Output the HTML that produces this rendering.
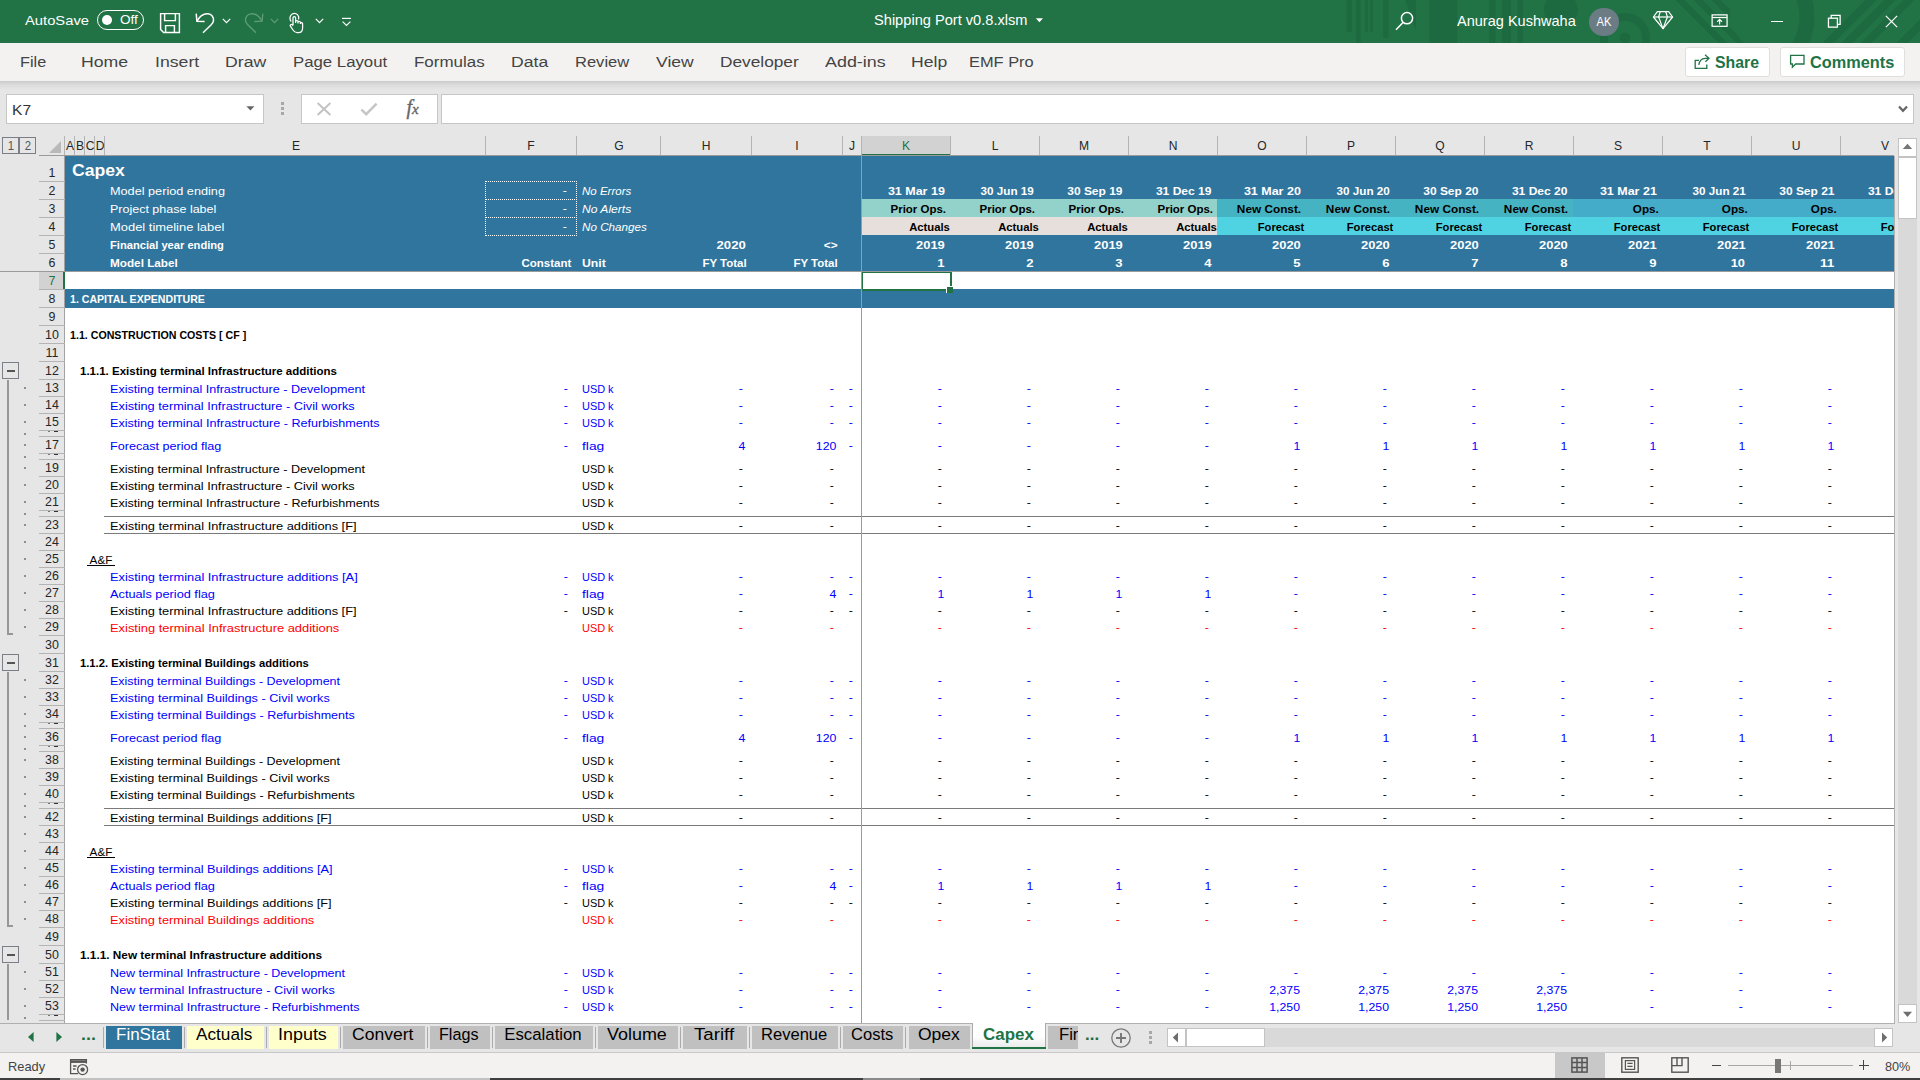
<!DOCTYPE html><html><head><meta charset="utf-8"><title>Shipping Port v0.8.xlsm - Excel</title><style>
html,body{margin:0;padding:0;background:#fff;}
#a{position:relative;width:1920px;height:1080px;overflow:hidden;background:#fff;font-family:"Liberation Sans", sans-serif;}
#a div,#a span,#a svg{position:absolute;}
#a span{white-space:pre;line-height:1;display:block;}
</style></head><body><div id="a">
<div style="left:0px;top:0px;width:1920px;height:43px;background:#217346;"></div>
<svg style="left:1340px;top:0" width="580" height="43" viewBox="0 0 580 43">
<g fill="#1e6a40">
<rect x="6.4" y="0" width="5.5" height="32"/><rect x="15.8" y="0" width="4.7" height="43"/>
<rect x="25" y="0" width="3" height="32"/><rect x="30" y="0" width="3" height="32"/>
<rect x="43" y="0" width="5.6" height="38"/>
<path d="M65 0 H76 V31 Z"/><rect x="89.3" y="0" width="28" height="43"/>
<rect x="149" y="0" width="6.6" height="43"/><rect x="162" y="0" width="9" height="43"/><rect x="177.5" y="0" width="5.5" height="43"/>
<circle cx="220.8" cy="9.9" r="17"/>
<circle cx="285" cy="38" r="5.5"/>
</g>
<g fill="none" stroke="#1e6a40">
<circle cx="285" cy="38" r="21" stroke-width="8"/>
<path d="M338 -2 L386 46 M356 -2 L404 46 M374 -2 L422 46" stroke-width="6.5"/>
<circle cx="426" cy="14" r="36" fill="#217346" stroke="none"/>
<path d="M440 -32 A 58 58 0 0 1 440 66" stroke-width="15"/>
<path d="M486 45 L534 -3 M505 45 L553 -3 M524 45 L572 -3 M560 45 L590 15" stroke-width="8"/>
</g></svg>
<div style="left:97px;top:10.3px;width:45px;height:17.6px;border:1.5px solid #fff;border-radius:11px;"></div>
<div style="left:102px;top:15.3px;width:10px;height:10px;border-radius:50%;background:#fff;"></div>
<svg style="left:159px;top:12px" width="22" height="22" viewBox="0 0 22 22" fill="none" stroke="#fff" stroke-width="1.45">
<path d="M1.6 1.6 H20.4 V20.4 H4.6 L1.6 17.4 Z"/><path d="M5.6 1.6 V8.6 H16.4 V1.6"/><path d="M6.6 20.4 V13.6 H15.4 V20.4"/></svg>
<svg style="left:194px;top:11px" width="22" height="24" viewBox="0 0 22 24" fill="none" stroke="#fff" stroke-width="1.5">
<path d="M2.2 2.6 L2.9 10.2 L10.6 10.5"/><path d="M3 10.1 C5.6 5.2 10 2.5 14 2.8 C17.6 3.1 19.8 6.2 19.5 9.6 C19.3 11.4 18.4 12.6 17 14 L9 21.7"/></svg>
<svg style="left:222px;top:18px" width="9" height="6" viewBox="0 0 9 6" fill="none" stroke="#fff" stroke-width="1.2"><path d="M0.8 0.8 L4.5 4.6 L8.2 0.8"/></svg>
<svg style="left:243px;top:11px" width="22" height="24" viewBox="0 0 22 24" fill="none" stroke="#5f9d7a" stroke-width="1.3">
<path d="M19.8 2.6 L19.1 10.2 L11.4 10.5"/><path d="M19 10.1 C16.4 5.2 12 2.5 8 2.8 C4.4 3.1 2.2 6.2 2.5 9.6 C2.7 11.4 3.6 12.6 5 14 L13 21.7"/></svg>
<svg style="left:270px;top:18px" width="9" height="6" viewBox="0 0 9 6" fill="none" stroke="#5f9d7a" stroke-width="1.2"><path d="M0.8 0.8 L4.5 4.6 L8.2 0.8"/></svg>
<svg style="left:287px;top:11px" width="19" height="24" viewBox="0 0 19 24" fill="none" stroke="#fff" stroke-width="1.25">
<path d="M4.2 10.5 C2.2 8.2 2.6 4.6 5.2 3 C7.8 1.6 10.8 2.8 11.6 5.6 C11.8 6.6 11.8 7.6 11.4 8.4"/>
<path d="M6 14.6 V6.8 C6 5.2 8.6 5.2 8.6 6.8 V12 M8.6 10.4 C8.6 9.2 11 9.2 11 10.6 V12.4 M11 11.2 C11 10 13.4 10.2 13.4 11.6 V13 M13.4 12.2 C13.4 11.2 15.6 11.4 15.6 12.8 V17 C15.6 19.8 14 21.6 11.4 21.6 H10 C8 21.6 7 20.6 6 19 L3.4 15.2 C2.6 14 4.2 12.8 5.2 13.8 L6 14.6"/></svg>
<svg style="left:315px;top:18px" width="9" height="6" viewBox="0 0 9 6" fill="none" stroke="#fff" stroke-width="1.2"><path d="M0.8 0.8 L4.5 4.6 L8.2 0.8"/></svg>
<svg style="left:341px;top:16px" width="11" height="11" viewBox="0 0 11 11" fill="none" stroke="#fff" stroke-width="1.2"><path d="M1 2.4 H10"/><path d="M1.6 5.6 L5.5 9.4 L9.4 5.6"/></svg>
<svg style="left:1035px;top:18px" width="9" height="5" viewBox="0 0 9 5"><path d="M0.8 0.3 H8 L4.4 4.2 Z" fill="#fff"/></svg>
<svg style="left:1394.2px;top:9.7px" width="22" height="22" viewBox="0 0 22 22" fill="none" stroke="#fff" stroke-width="1.5"><circle cx="13" cy="8.2" r="5.6"/><path d="M9 12.4 L2 19.8"/></svg>
<div style="left:1589.3px;top:8px;width:29.4px;height:28.4px;border-radius:50%;background:#6c7c85;"></div>
<svg style="left:1652px;top:10px" width="22" height="20" viewBox="0 0 22 20" fill="none" stroke="#fff" stroke-width="1.2" stroke-linejoin="round">
<path d="M5.4 1.6 H16.6 L20.6 7 L11 18.6 L1.4 7 Z"/><path d="M1.4 7 H20.6"/><path d="M8.2 1.6 L6.6 7 L11 18.6 L15.4 7 L13.8 1.6"/></svg>
<svg style="left:1711px;top:14.4px" width="17.2" height="13.2" viewBox="0 0 19 15" fill="none" stroke="#fff" stroke-width="1.4">
<rect x="1" y="1" width="17" height="13"/><path d="M1 4 H18"/><path d="M9.5 12 V6.4 M6.8 8.8 L9.5 6.2 L12.2 8.8"/></svg>
<div style="left:1770.8px;top:20.6px;width:12.6px;height:1.4px;background:#fff;"></div>
<svg style="left:1826.6px;top:13.6px" width="14.6" height="14.6" viewBox="0 0 16 16" fill="none" stroke="#fff" stroke-width="1.4"><rect x="1.6" y="4.6" width="9.8" height="9.8"/><path d="M4.6 4.6 V1.6 H14.4 V11.4 H11.4"/></svg>
<svg style="left:1884.6px;top:14.6px" width="13" height="13" viewBox="0 0 15 15" fill="none" stroke="#fff" stroke-width="1.5"><path d="M1 1 L14 14 M14 1 L1 14"/></svg>
<div style="left:0px;top:43px;width:1920px;height:38px;background:#f3f2f1;"></div>
<div style="left:0px;top:81px;width:1920px;height:55px;background:#e6e6e6;"></div>
<div style="left:0;top:81px;width:1920px;height:9px;background:linear-gradient(#cbcbcb,#dcdcdc 45%,#e6e6e6);"></div>
<div style="left:1685px;top:47px;width:83px;height:28px;background:#fff;border:1px solid #e1dfdd;border-radius:3px;box-sizing:content-box"></div>
<div style="left:1780px;top:47px;width:123px;height:28px;background:#fff;border:1px solid #e1dfdd;border-radius:3px;box-sizing:content-box"></div>
<svg style="left:1693px;top:53px" width="18" height="17" viewBox="0 0 18 17" fill="none" stroke="#217346" stroke-width="1.3">
<path d="M6 7.3 H2.2 V15.4 H13.8 V11.4"/><path d="M5.8 11.8 C6.4 8 8.6 5.6 12 5.4 H15.6 M12 1.8 L16 5.3 L12.4 8.8"/></svg>
<svg style="left:1789px;top:54px" width="17" height="15" viewBox="0 0 17 15" fill="none" stroke="#217346" stroke-width="1.3">
<path d="M1.6 1.4 H15 V10 H6.6 L3.4 13.2 V10 H1.6 Z"/></svg>
<div style="left:6px;top:94px;width:256px;height:28px;background:#fff;border:1px solid #c6c6c6;"></div>
<svg style="left:246px;top:106px" width="9" height="5" viewBox="0 0 9 5"><path d="M0.4 0.3 H8.4 L4.4 4.4 Z" fill="#666"/></svg>
<div style="left:281px;top:102px;width:3px;height:3px;background:#a8a8a8;"></div>
<div style="left:281px;top:107px;width:3px;height:3px;background:#a8a8a8;"></div>
<div style="left:281px;top:112px;width:3px;height:3px;background:#a8a8a8;"></div>
<div style="left:301px;top:94px;width:135px;height:28px;background:#fff;border:1px solid #c6c6c6;"></div>
<svg style="left:316px;top:102px" width="16" height="14" viewBox="0 0 16 14" fill="none" stroke="#c2c2c2" stroke-width="1.9"><path d="M1.6 1 L14.4 13 M14.4 1 L1.6 13"/></svg>
<svg style="left:360px;top:102px" width="18" height="14" viewBox="0 0 18 14" fill="none" stroke="#c6c6c6" stroke-width="2.5"><path d="M1.4 7.6 L6.2 12.2 L16.6 1.6"/></svg>
<span style="left:406.5px;top:95px;font-family:'Liberation Serif',serif;font-style:italic;font-size:20px;color:#666;font-weight:400;-webkit-text-stroke:0.35px #666;letter-spacing:0px;line-height:1.2;">f<span style="position:static;display:inline;font-size:15px;">x</span></span>
<div style="left:441px;top:94px;width:1471px;height:28px;background:#fff;border:1px solid #c6c6c6;"></div>
<svg style="left:1898.4px;top:104.6px" width="10" height="8" viewBox="0 0 10 8" fill="none" stroke="#666" stroke-width="2.2"><path d="M1 1.4 L5 5.8 L9 1.4"/></svg>
<div style="left:0px;top:136px;width:1920px;height:20px;background:#e6e6e6;"></div>
<div style="left:862px;top:136px;width:88px;height:20px;background:#d2d2d2;"></div>
<div style="left:862px;top:154px;width:89px;height:2px;background:#217346;"></div>
<div style="left:74px;top:136px;width:1px;height:19px;background:#b4b4b4;"></div>
<div style="left:84px;top:136px;width:1px;height:19px;background:#b4b4b4;"></div>
<div style="left:94px;top:136px;width:1px;height:19px;background:#b4b4b4;"></div>
<div style="left:104px;top:136px;width:1px;height:19px;background:#b4b4b4;"></div>
<div style="left:485px;top:136px;width:1px;height:19px;background:#b4b4b4;"></div>
<div style="left:576px;top:136px;width:1px;height:19px;background:#b4b4b4;"></div>
<div style="left:660px;top:136px;width:1px;height:19px;background:#b4b4b4;"></div>
<div style="left:751px;top:136px;width:1px;height:19px;background:#b4b4b4;"></div>
<div style="left:842px;top:136px;width:1px;height:19px;background:#b4b4b4;"></div>
<div style="left:861px;top:136px;width:1px;height:19px;background:#b4b4b4;"></div>
<div style="left:950px;top:136px;width:1px;height:19px;background:#b4b4b4;"></div>
<div style="left:1039px;top:136px;width:1px;height:19px;background:#b4b4b4;"></div>
<div style="left:1128px;top:136px;width:1px;height:19px;background:#b4b4b4;"></div>
<div style="left:1217px;top:136px;width:1px;height:19px;background:#b4b4b4;"></div>
<div style="left:1306px;top:136px;width:1px;height:19px;background:#b4b4b4;"></div>
<div style="left:1395px;top:136px;width:1px;height:19px;background:#b4b4b4;"></div>
<div style="left:1484px;top:136px;width:1px;height:19px;background:#b4b4b4;"></div>
<div style="left:1573px;top:136px;width:1px;height:19px;background:#b4b4b4;"></div>
<div style="left:1662px;top:136px;width:1px;height:19px;background:#b4b4b4;"></div>
<div style="left:1751px;top:136px;width:1px;height:19px;background:#b4b4b4;"></div>
<div style="left:1840px;top:136px;width:1px;height:19px;background:#b4b4b4;"></div>
<div style="left:64px;top:136px;width:1px;height:19px;background:#b4b4b4;"></div>
<div style="left:39px;top:155px;width:1856px;height:1px;background:#9b9b9b;"></div>
<svg style="left:48px;top:140px" width="14" height="14" viewBox="0 0 14 14"><path d="M13 1 V13 H1 Z" fill="#b9b9b9"/></svg>
<div style="left:2px;top:137px;width:15px;height:15px;border:1px solid #7b7e86;background:#e6e6e6;"></div>
<div style="left:19px;top:137px;width:15px;height:15px;border:1px solid #7b7e86;background:#e6e6e6;"></div>
<div style="left:0px;top:156px;width:65px;height:867px;background:#e6e6e6;"></div>
<div style="left:64px;top:156px;width:1px;height:867px;background:#a2a2a2;"></div>
<div style="left:39px;top:272px;width:25px;height:18px;background:#d2d2d2;"></div>
<div style="left:63px;top:272px;width:2px;height:18px;background:#217346;"></div>
<div style="left:39px;top:181px;width:26px;height:1px;background:#b4b4b4;"></div>
<div style="left:39px;top:199px;width:26px;height:1px;background:#b4b4b4;"></div>
<div style="left:39px;top:217px;width:26px;height:1px;background:#b4b4b4;"></div>
<div style="left:39px;top:235px;width:26px;height:1px;background:#b4b4b4;"></div>
<div style="left:39px;top:253px;width:26px;height:1px;background:#b4b4b4;"></div>
<div style="left:39px;top:271px;width:26px;height:1px;background:#b4b4b4;"></div>
<div style="left:39px;top:289px;width:26px;height:1px;background:#b4b4b4;"></div>
<div style="left:39px;top:307px;width:26px;height:1px;background:#b4b4b4;"></div>
<div style="left:39px;top:325px;width:26px;height:1px;background:#b4b4b4;"></div>
<div style="left:39px;top:343px;width:26px;height:1px;background:#b4b4b4;"></div>
<div style="left:39px;top:361px;width:26px;height:1px;background:#b4b4b4;"></div>
<div style="left:39px;top:379px;width:26px;height:1px;background:#b4b4b4;"></div>
<div style="left:39px;top:396px;width:26px;height:1px;background:#b4b4b4;"></div>
<div style="left:39px;top:413px;width:26px;height:1px;background:#b4b4b4;"></div>
<div style="left:39px;top:430px;width:26px;height:1px;background:#b4b4b4;"></div>
<div style="left:39px;top:436px;width:26px;height:1px;background:#b4b4b4;"></div>
<div style="left:48px;top:431px;width:2px;height:1px;background:#777;"></div>
<div style="left:54px;top:431px;width:4px;height:1px;background:#333;"></div>
<div style="left:39px;top:453px;width:26px;height:1px;background:#b4b4b4;"></div>
<div style="left:39px;top:459px;width:26px;height:1px;background:#b4b4b4;"></div>
<div style="left:48px;top:454px;width:2px;height:1px;background:#777;"></div>
<div style="left:54px;top:454px;width:4px;height:1px;background:#333;"></div>
<div style="left:39px;top:476px;width:26px;height:1px;background:#b4b4b4;"></div>
<div style="left:39px;top:493px;width:26px;height:1px;background:#b4b4b4;"></div>
<div style="left:39px;top:510px;width:26px;height:1px;background:#b4b4b4;"></div>
<div style="left:39px;top:516px;width:26px;height:1px;background:#b4b4b4;"></div>
<div style="left:48px;top:511px;width:2px;height:1px;background:#777;"></div>
<div style="left:54px;top:511px;width:4px;height:1px;background:#333;"></div>
<div style="left:39px;top:533px;width:26px;height:1px;background:#b4b4b4;"></div>
<div style="left:39px;top:550px;width:26px;height:1px;background:#b4b4b4;"></div>
<div style="left:39px;top:567px;width:26px;height:1px;background:#b4b4b4;"></div>
<div style="left:39px;top:584px;width:26px;height:1px;background:#b4b4b4;"></div>
<div style="left:39px;top:601px;width:26px;height:1px;background:#b4b4b4;"></div>
<div style="left:39px;top:618px;width:26px;height:1px;background:#b4b4b4;"></div>
<div style="left:39px;top:635px;width:26px;height:1px;background:#b4b4b4;"></div>
<div style="left:39px;top:653px;width:26px;height:1px;background:#b4b4b4;"></div>
<div style="left:39px;top:671px;width:26px;height:1px;background:#b4b4b4;"></div>
<div style="left:39px;top:688px;width:26px;height:1px;background:#b4b4b4;"></div>
<div style="left:39px;top:705px;width:26px;height:1px;background:#b4b4b4;"></div>
<div style="left:39px;top:722px;width:26px;height:1px;background:#b4b4b4;"></div>
<div style="left:39px;top:728px;width:26px;height:1px;background:#b4b4b4;"></div>
<div style="left:48px;top:723px;width:2px;height:1px;background:#777;"></div>
<div style="left:54px;top:723px;width:4px;height:1px;background:#333;"></div>
<div style="left:39px;top:745px;width:26px;height:1px;background:#b4b4b4;"></div>
<div style="left:39px;top:751px;width:26px;height:1px;background:#b4b4b4;"></div>
<div style="left:48px;top:746px;width:2px;height:1px;background:#777;"></div>
<div style="left:54px;top:746px;width:4px;height:1px;background:#333;"></div>
<div style="left:39px;top:768px;width:26px;height:1px;background:#b4b4b4;"></div>
<div style="left:39px;top:785px;width:26px;height:1px;background:#b4b4b4;"></div>
<div style="left:39px;top:802px;width:26px;height:1px;background:#b4b4b4;"></div>
<div style="left:39px;top:808px;width:26px;height:1px;background:#b4b4b4;"></div>
<div style="left:48px;top:803px;width:2px;height:1px;background:#777;"></div>
<div style="left:54px;top:803px;width:4px;height:1px;background:#333;"></div>
<div style="left:39px;top:825px;width:26px;height:1px;background:#b4b4b4;"></div>
<div style="left:39px;top:842px;width:26px;height:1px;background:#b4b4b4;"></div>
<div style="left:39px;top:859px;width:26px;height:1px;background:#b4b4b4;"></div>
<div style="left:39px;top:876px;width:26px;height:1px;background:#b4b4b4;"></div>
<div style="left:39px;top:893px;width:26px;height:1px;background:#b4b4b4;"></div>
<div style="left:39px;top:910px;width:26px;height:1px;background:#b4b4b4;"></div>
<div style="left:39px;top:927px;width:26px;height:1px;background:#b4b4b4;"></div>
<div style="left:39px;top:945px;width:26px;height:1px;background:#b4b4b4;"></div>
<div style="left:39px;top:963px;width:26px;height:1px;background:#b4b4b4;"></div>
<div style="left:39px;top:980px;width:26px;height:1px;background:#b4b4b4;"></div>
<div style="left:39px;top:997px;width:26px;height:1px;background:#b4b4b4;"></div>
<div style="left:39px;top:1014px;width:26px;height:1px;background:#b4b4b4;"></div>
<div style="left:39px;top:1020px;width:26px;height:1px;background:#b4b4b4;"></div>
<div style="left:48px;top:1015px;width:2px;height:1px;background:#777;"></div>
<div style="left:54px;top:1015px;width:4px;height:1px;background:#333;"></div>
<div style="left:2px;top:362px;width:15px;height:15px;border:1px solid #7b7e86;background:#e6e6e6;"></div>
<div style="left:6.5px;top:369.5px;width:8px;height:2px;background:#555;"></div>
<div style="left:7px;top:379.5px;width:2px;height:255.0px;background:#979797;"></div>
<div style="left:7px;top:632.5px;width:6.4px;height:2px;background:#979797;"></div>
<div style="left:24px;top:387px;width:2px;height:2px;background:#8f8f8f;"></div>
<div style="left:24px;top:404px;width:2px;height:2px;background:#8f8f8f;"></div>
<div style="left:24px;top:421px;width:2px;height:2px;background:#8f8f8f;"></div>
<div style="left:24px;top:433px;width:2px;height:2px;background:#8f8f8f;"></div>
<div style="left:24px;top:444px;width:2px;height:2px;background:#8f8f8f;"></div>
<div style="left:24px;top:456px;width:2px;height:2px;background:#8f8f8f;"></div>
<div style="left:24px;top:467px;width:2px;height:2px;background:#8f8f8f;"></div>
<div style="left:24px;top:484px;width:2px;height:2px;background:#8f8f8f;"></div>
<div style="left:24px;top:501px;width:2px;height:2px;background:#8f8f8f;"></div>
<div style="left:24px;top:513px;width:2px;height:2px;background:#8f8f8f;"></div>
<div style="left:24px;top:524px;width:2px;height:2px;background:#8f8f8f;"></div>
<div style="left:24px;top:541px;width:2px;height:2px;background:#8f8f8f;"></div>
<div style="left:24px;top:558px;width:2px;height:2px;background:#8f8f8f;"></div>
<div style="left:24px;top:575px;width:2px;height:2px;background:#8f8f8f;"></div>
<div style="left:24px;top:592px;width:2px;height:2px;background:#8f8f8f;"></div>
<div style="left:24px;top:609px;width:2px;height:2px;background:#8f8f8f;"></div>
<div style="left:24px;top:626px;width:2px;height:2px;background:#8f8f8f;"></div>
<div style="left:2px;top:654px;width:15px;height:15px;border:1px solid #7b7e86;background:#e6e6e6;"></div>
<div style="left:6.5px;top:661.5px;width:8px;height:2px;background:#555;"></div>
<div style="left:7px;top:671.5px;width:2px;height:255.0px;background:#979797;"></div>
<div style="left:7px;top:924.5px;width:6.4px;height:2px;background:#979797;"></div>
<div style="left:24px;top:679px;width:2px;height:2px;background:#8f8f8f;"></div>
<div style="left:24px;top:696px;width:2px;height:2px;background:#8f8f8f;"></div>
<div style="left:24px;top:713px;width:2px;height:2px;background:#8f8f8f;"></div>
<div style="left:24px;top:725px;width:2px;height:2px;background:#8f8f8f;"></div>
<div style="left:24px;top:736px;width:2px;height:2px;background:#8f8f8f;"></div>
<div style="left:24px;top:748px;width:2px;height:2px;background:#8f8f8f;"></div>
<div style="left:24px;top:759px;width:2px;height:2px;background:#8f8f8f;"></div>
<div style="left:24px;top:776px;width:2px;height:2px;background:#8f8f8f;"></div>
<div style="left:24px;top:793px;width:2px;height:2px;background:#8f8f8f;"></div>
<div style="left:24px;top:805px;width:2px;height:2px;background:#8f8f8f;"></div>
<div style="left:24px;top:816px;width:2px;height:2px;background:#8f8f8f;"></div>
<div style="left:24px;top:833px;width:2px;height:2px;background:#8f8f8f;"></div>
<div style="left:24px;top:850px;width:2px;height:2px;background:#8f8f8f;"></div>
<div style="left:24px;top:867px;width:2px;height:2px;background:#8f8f8f;"></div>
<div style="left:24px;top:884px;width:2px;height:2px;background:#8f8f8f;"></div>
<div style="left:24px;top:901px;width:2px;height:2px;background:#8f8f8f;"></div>
<div style="left:24px;top:918px;width:2px;height:2px;background:#8f8f8f;"></div>
<div style="left:2px;top:946px;width:15px;height:15px;border:1px solid #7b7e86;background:#e6e6e6;"></div>
<div style="left:6.5px;top:953.5px;width:8px;height:2px;background:#555;"></div>
<div style="left:7px;top:963.5px;width:2px;height:56.0px;background:#979797;"></div>
<div style="left:24px;top:971px;width:2px;height:2px;background:#8f8f8f;"></div>
<div style="left:24px;top:988px;width:2px;height:2px;background:#8f8f8f;"></div>
<div style="left:24px;top:1005px;width:2px;height:2px;background:#8f8f8f;"></div>
<div style="left:24px;top:1017px;width:2px;height:2px;background:#8f8f8f;"></div>
<div style="left:65px;top:156px;width:1829px;height:867px;background:#fff;"></div>
<div style="left:65px;top:156px;width:1829px;height:115px;background:#2f759e;"></div>
<div style="left:65px;top:289px;width:1829px;height:19px;background:#2f759e;"></div>
<div style="left:862px;top:199px;width:355px;height:18px;background:#93d2ca;"></div>
<div style="left:1217px;top:199px;width:356px;height:18px;background:#46b3c3;"></div>
<div style="left:1573px;top:199px;width:321px;height:18px;background:#44abc9;"></div>
<div style="left:862px;top:217px;width:355px;height:18px;background:#e7dfdb;"></div>
<div style="left:1217px;top:217px;width:677px;height:18px;background:#4fd3e3;"></div>
<div style="left:485px;top:181px;width:90px;height:17px;border:1px dotted #fff;"></div>
<div style="left:485px;top:199px;width:90px;height:17px;border:1px dotted #fff;"></div>
<div style="left:485px;top:217px;width:90px;height:17px;border:1px dotted #fff;"></div>
<div style="left:104px;top:516px;width:1790px;height:1px;background:#7a7a7a;"></div>
<div style="left:104px;top:533px;width:1790px;height:1px;background:#7a7a7a;"></div>
<div style="left:87.3px;top:565.2px;width:27.4px;height:1px;background:#000;"></div>
<div style="left:104px;top:808px;width:1790px;height:1px;background:#7a7a7a;"></div>
<div style="left:104px;top:825px;width:1790px;height:1px;background:#7a7a7a;"></div>
<div style="left:87.3px;top:857.2px;width:27.4px;height:1px;background:#000;"></div>
<span style="font-size:13.6px;top:13.79px;color:#fff;left:25.184px;transform:scaleX(1.086);transform-origin:left center;">AutoSave</span>
<span style="font-size:12px;top:14.44px;color:#fff;left:119.88px;transform:scaleX(1.128);transform-origin:left center;">Off</span>
<span style="font-size:14px;top:12.85px;color:#fff;left:873.9599999999999px;transform:scaleX(1.044);transform-origin:left center;">Shipping Port v0.8.xlsm</span>
<span style="font-size:14.4px;top:14.41px;color:#fff;left:1457.336px;transform:scaleX(1.010);transform-origin:left center;">Anurag Kushwaha</span>
<span style="font-size:12px;top:15.74px;color:#fff;left:1603.5px;transform:translateX(-50%) scaleX(0.930);transform-origin:center center;">AK</span>
<span style="font-size:15.5px;top:54.28px;color:#444;left:20.07px;transform:scaleX(1.049);transform-origin:left center;">File</span>
<span style="font-size:15.5px;top:54.28px;color:#444;left:81.07px;transform:scaleX(1.141);transform-origin:left center;">Home</span>
<span style="font-size:15.5px;top:54.28px;color:#444;left:155.07px;transform:scaleX(1.140);transform-origin:left center;">Insert</span>
<span style="font-size:15.5px;top:54.28px;color:#444;left:225.07px;transform:scaleX(1.139);transform-origin:left center;">Draw</span>
<span style="font-size:15.5px;top:54.28px;color:#444;left:293.07px;transform:scaleX(1.082);transform-origin:left center;">Page Layout</span>
<span style="font-size:15.5px;top:54.28px;color:#444;left:414.07px;transform:scaleX(1.094);transform-origin:left center;">Formulas</span>
<span style="font-size:15.5px;top:54.28px;color:#444;left:511.07px;transform:scaleX(1.136);transform-origin:left center;">Data</span>
<span style="font-size:15.5px;top:54.28px;color:#444;left:575.07px;transform:scaleX(1.066);transform-origin:left center;">Review</span>
<span style="font-size:15.5px;top:54.28px;color:#444;left:656.07px;transform:scaleX(1.131);transform-origin:left center;">View</span>
<span style="font-size:15.5px;top:54.28px;color:#444;left:720.07px;transform:scaleX(1.114);transform-origin:left center;">Developer</span>
<span style="font-size:15.5px;top:54.28px;color:#444;left:825.07px;transform:scaleX(1.155);transform-origin:left center;">Add-ins</span>
<span style="font-size:15.5px;top:54.28px;color:#444;left:911.07px;transform:scaleX(1.135);transform-origin:left center;">Help</span>
<span style="font-size:15.5px;top:54.28px;color:#444;left:969.07px;transform:scaleX(1.058);transform-origin:left center;">EMF Pro</span>
<span style="font-size:16.2px;top:53.89px;color:#217346;font-weight:700;left:1714.628px;transform:scaleX(0.977);transform-origin:left center;">Share</span>
<span style="font-size:16.2px;top:53.89px;color:#217346;font-weight:700;left:1809.628px;transform:scaleX(1.007);transform-origin:left center;">Comments</span>
<span style="font-size:14px;top:102.75px;color:#333;left:12.16px;transform:scaleX(1.112);transform-origin:left center;">K7</span>
<span style="font-size:13px;top:138.60px;color:#262626;left:70.3px;transform:translateX(-50%) scaleX(0.930);transform-origin:center center;">A</span>
<span style="font-size:13px;top:138.60px;color:#262626;left:80.3px;transform:translateX(-50%) scaleX(0.930);transform-origin:center center;">B</span>
<span style="font-size:13px;top:138.60px;color:#262626;left:90.3px;transform:translateX(-50%) scaleX(0.930);transform-origin:center center;">C</span>
<span style="font-size:13px;top:138.60px;color:#262626;left:100.3px;transform:translateX(-50%) scaleX(0.930);transform-origin:center center;">D</span>
<span style="font-size:13px;top:138.60px;color:#262626;left:295.5px;transform:translateX(-50%) scaleX(0.930);transform-origin:center center;">E</span>
<span style="font-size:13px;top:138.60px;color:#262626;left:531.0px;transform:translateX(-50%) scaleX(0.930);transform-origin:center center;">F</span>
<span style="font-size:13px;top:138.60px;color:#262626;left:618.5px;transform:translateX(-50%) scaleX(0.930);transform-origin:center center;">G</span>
<span style="font-size:13px;top:138.60px;color:#262626;left:706.0px;transform:translateX(-50%) scaleX(0.930);transform-origin:center center;">H</span>
<span style="font-size:13px;top:138.60px;color:#262626;left:797.0px;transform:translateX(-50%) scaleX(0.930);transform-origin:center center;">I</span>
<span style="font-size:13px;top:138.60px;color:#262626;left:852.0px;transform:translateX(-50%) scaleX(0.930);transform-origin:center center;">J</span>
<span style="font-size:13px;top:138.60px;color:#217346;left:906.0px;transform:translateX(-50%) scaleX(0.930);transform-origin:center center;">K</span>
<span style="font-size:13px;top:138.60px;color:#262626;left:995.0px;transform:translateX(-50%) scaleX(0.930);transform-origin:center center;">L</span>
<span style="font-size:13px;top:138.60px;color:#262626;left:1084.0px;transform:translateX(-50%) scaleX(0.930);transform-origin:center center;">M</span>
<span style="font-size:13px;top:138.60px;color:#262626;left:1173.0px;transform:translateX(-50%) scaleX(0.930);transform-origin:center center;">N</span>
<span style="font-size:13px;top:138.60px;color:#262626;left:1262.0px;transform:translateX(-50%) scaleX(0.930);transform-origin:center center;">O</span>
<span style="font-size:13px;top:138.60px;color:#262626;left:1351.0px;transform:translateX(-50%) scaleX(0.930);transform-origin:center center;">P</span>
<span style="font-size:13px;top:138.60px;color:#262626;left:1440.0px;transform:translateX(-50%) scaleX(0.930);transform-origin:center center;">Q</span>
<span style="font-size:13px;top:138.60px;color:#262626;left:1529.0px;transform:translateX(-50%) scaleX(0.930);transform-origin:center center;">R</span>
<span style="font-size:13px;top:138.60px;color:#262626;left:1618.0px;transform:translateX(-50%) scaleX(0.930);transform-origin:center center;">S</span>
<span style="font-size:13px;top:138.60px;color:#262626;left:1707.0px;transform:translateX(-50%) scaleX(0.930);transform-origin:center center;">T</span>
<span style="font-size:13px;top:138.60px;color:#262626;left:1796.0px;transform:translateX(-50%) scaleX(0.930);transform-origin:center center;">U</span>
<span style="font-size:13px;top:138.60px;color:#262626;left:1885.3px;transform:translateX(-50%) scaleX(0.930);transform-origin:center center;">V</span>
<span style="font-size:12px;top:139.84px;color:#555;left:10.7px;transform:translateX(-50%) scaleX(0.950);transform-origin:center center;">1</span>
<span style="font-size:12px;top:139.84px;color:#555;left:27.7px;transform:translateX(-50%) scaleX(0.950);transform-origin:center center;">2</span>
<span style="font-size:13.5px;top:165.57px;color:#262626;left:52.3px;transform:translateX(-50%) scaleX(0.920);transform-origin:center center;">1</span>
<span style="font-size:13.5px;top:183.57px;color:#262626;left:52.3px;transform:translateX(-50%) scaleX(0.920);transform-origin:center center;">2</span>
<span style="font-size:13.5px;top:201.57px;color:#262626;left:52.3px;transform:translateX(-50%) scaleX(0.920);transform-origin:center center;">3</span>
<span style="font-size:13.5px;top:219.57px;color:#262626;left:52.3px;transform:translateX(-50%) scaleX(0.920);transform-origin:center center;">4</span>
<span style="font-size:13.5px;top:237.57px;color:#262626;left:52.3px;transform:translateX(-50%) scaleX(0.920);transform-origin:center center;">5</span>
<span style="font-size:13.5px;top:255.57px;color:#262626;left:52.3px;transform:translateX(-50%) scaleX(0.920);transform-origin:center center;">6</span>
<span style="font-size:13.5px;top:273.57px;color:#217346;left:52.3px;transform:translateX(-50%) scaleX(0.920);transform-origin:center center;">7</span>
<span style="font-size:13.5px;top:291.57px;color:#262626;left:52.3px;transform:translateX(-50%) scaleX(0.920);transform-origin:center center;">8</span>
<span style="font-size:13.5px;top:309.57px;color:#262626;left:52.3px;transform:translateX(-50%) scaleX(0.920);transform-origin:center center;">9</span>
<span style="font-size:13.5px;top:327.57px;color:#262626;left:52.3px;transform:translateX(-50%) scaleX(0.920);transform-origin:center center;">10</span>
<span style="font-size:13.5px;top:345.57px;color:#262626;left:52.3px;transform:translateX(-50%) scaleX(0.920);transform-origin:center center;">11</span>
<span style="font-size:13.5px;top:363.57px;color:#262626;left:52.3px;transform:translateX(-50%) scaleX(0.920);transform-origin:center center;">12</span>
<span style="font-size:13.5px;top:381.37px;color:#262626;left:52.3px;transform:translateX(-50%) scaleX(0.920);transform-origin:center center;">13</span>
<span style="font-size:13.5px;top:398.37px;color:#262626;left:52.3px;transform:translateX(-50%) scaleX(0.920);transform-origin:center center;">14</span>
<span style="font-size:13.5px;top:415.37px;color:#262626;left:52.3px;transform:translateX(-50%) scaleX(0.920);transform-origin:center center;">15</span>
<span style="font-size:13.5px;top:438.37px;color:#262626;left:52.3px;transform:translateX(-50%) scaleX(0.920);transform-origin:center center;">17</span>
<span style="font-size:13.5px;top:461.37px;color:#262626;left:52.3px;transform:translateX(-50%) scaleX(0.920);transform-origin:center center;">19</span>
<span style="font-size:13.5px;top:478.37px;color:#262626;left:52.3px;transform:translateX(-50%) scaleX(0.920);transform-origin:center center;">20</span>
<span style="font-size:13.5px;top:495.37px;color:#262626;left:52.3px;transform:translateX(-50%) scaleX(0.920);transform-origin:center center;">21</span>
<span style="font-size:13.5px;top:518.37px;color:#262626;left:52.3px;transform:translateX(-50%) scaleX(0.920);transform-origin:center center;">23</span>
<span style="font-size:13.5px;top:535.37px;color:#262626;left:52.3px;transform:translateX(-50%) scaleX(0.920);transform-origin:center center;">24</span>
<span style="font-size:13.5px;top:552.37px;color:#262626;left:52.3px;transform:translateX(-50%) scaleX(0.920);transform-origin:center center;">25</span>
<span style="font-size:13.5px;top:569.37px;color:#262626;left:52.3px;transform:translateX(-50%) scaleX(0.920);transform-origin:center center;">26</span>
<span style="font-size:13.5px;top:586.37px;color:#262626;left:52.3px;transform:translateX(-50%) scaleX(0.920);transform-origin:center center;">27</span>
<span style="font-size:13.5px;top:603.37px;color:#262626;left:52.3px;transform:translateX(-50%) scaleX(0.920);transform-origin:center center;">28</span>
<span style="font-size:13.5px;top:620.37px;color:#262626;left:52.3px;transform:translateX(-50%) scaleX(0.920);transform-origin:center center;">29</span>
<span style="font-size:13.5px;top:637.57px;color:#262626;left:52.3px;transform:translateX(-50%) scaleX(0.920);transform-origin:center center;">30</span>
<span style="font-size:13.5px;top:655.57px;color:#262626;left:52.3px;transform:translateX(-50%) scaleX(0.920);transform-origin:center center;">31</span>
<span style="font-size:13.5px;top:673.37px;color:#262626;left:52.3px;transform:translateX(-50%) scaleX(0.920);transform-origin:center center;">32</span>
<span style="font-size:13.5px;top:690.37px;color:#262626;left:52.3px;transform:translateX(-50%) scaleX(0.920);transform-origin:center center;">33</span>
<span style="font-size:13.5px;top:707.37px;color:#262626;left:52.3px;transform:translateX(-50%) scaleX(0.920);transform-origin:center center;">34</span>
<span style="font-size:13.5px;top:730.37px;color:#262626;left:52.3px;transform:translateX(-50%) scaleX(0.920);transform-origin:center center;">36</span>
<span style="font-size:13.5px;top:753.37px;color:#262626;left:52.3px;transform:translateX(-50%) scaleX(0.920);transform-origin:center center;">38</span>
<span style="font-size:13.5px;top:770.37px;color:#262626;left:52.3px;transform:translateX(-50%) scaleX(0.920);transform-origin:center center;">39</span>
<span style="font-size:13.5px;top:787.37px;color:#262626;left:52.3px;transform:translateX(-50%) scaleX(0.920);transform-origin:center center;">40</span>
<span style="font-size:13.5px;top:810.37px;color:#262626;left:52.3px;transform:translateX(-50%) scaleX(0.920);transform-origin:center center;">42</span>
<span style="font-size:13.5px;top:827.37px;color:#262626;left:52.3px;transform:translateX(-50%) scaleX(0.920);transform-origin:center center;">43</span>
<span style="font-size:13.5px;top:844.37px;color:#262626;left:52.3px;transform:translateX(-50%) scaleX(0.920);transform-origin:center center;">44</span>
<span style="font-size:13.5px;top:861.37px;color:#262626;left:52.3px;transform:translateX(-50%) scaleX(0.920);transform-origin:center center;">45</span>
<span style="font-size:13.5px;top:878.37px;color:#262626;left:52.3px;transform:translateX(-50%) scaleX(0.920);transform-origin:center center;">46</span>
<span style="font-size:13.5px;top:895.37px;color:#262626;left:52.3px;transform:translateX(-50%) scaleX(0.920);transform-origin:center center;">47</span>
<span style="font-size:13.5px;top:912.37px;color:#262626;left:52.3px;transform:translateX(-50%) scaleX(0.920);transform-origin:center center;">48</span>
<span style="font-size:13.5px;top:929.57px;color:#262626;left:52.3px;transform:translateX(-50%) scaleX(0.920);transform-origin:center center;">49</span>
<span style="font-size:13.5px;top:947.57px;color:#262626;left:52.3px;transform:translateX(-50%) scaleX(0.920);transform-origin:center center;">50</span>
<span style="font-size:13.5px;top:965.37px;color:#262626;left:52.3px;transform:translateX(-50%) scaleX(0.920);transform-origin:center center;">51</span>
<span style="font-size:13.5px;top:982.37px;color:#262626;left:52.3px;transform:translateX(-50%) scaleX(0.920);transform-origin:center center;">52</span>
<span style="font-size:13.5px;top:999.37px;color:#262626;left:52.3px;transform:translateX(-50%) scaleX(0.920);transform-origin:center center;">53</span>
<span style="font-size:13.5px;top:1022.37px;color:#262626;left:52.3px;transform:translateX(-50%) scaleX(0.920);transform-origin:center center;">55</span>
<span style="font-size:17px;top:161.51px;color:#fff;font-weight:700;left:72.28px;transform:scaleX(1.036);transform-origin:left center;">Capex</span>
<span style="font-size:11.6px;top:185.18px;color:#fff;left:109.804px;transform:scaleX(1.094);transform-origin:left center;">Model period ending</span>
<span style="font-size:11.6px;top:203.18px;color:#fff;left:109.804px;transform:scaleX(1.078);transform-origin:left center;">Project phase label</span>
<span style="font-size:11.6px;top:221.18px;color:#fff;left:109.804px;transform:scaleX(1.115);transform-origin:left center;">Model timeline label</span>
<span style="font-size:11.6px;top:239.18px;color:#fff;font-weight:700;left:109.804px;transform:scaleX(0.961);transform-origin:left center;">Financial year ending</span>
<span style="font-size:11.6px;top:257.18px;color:#fff;font-weight:700;left:109.804px;transform:scaleX(1.012);transform-origin:left center;">Model Label</span>
<span style="font-size:11.6px;top:184.28px;color:#fff;right:1353.40px;transform:scaleX(1.060);transform-origin:right center;">-</span>
<span style="font-size:11.6px;top:185.18px;color:#fff;font-style:italic;left:581.6039999999999px;transform:scaleX(0.993);transform-origin:left center;">No Errors</span>
<span style="font-size:11.6px;top:202.28px;color:#fff;right:1353.40px;transform:scaleX(1.060);transform-origin:right center;">-</span>
<span style="font-size:11.6px;top:203.18px;color:#fff;font-style:italic;left:581.6039999999999px;transform:scaleX(1.043);transform-origin:left center;">No Alerts</span>
<span style="font-size:11.6px;top:220.28px;color:#fff;right:1353.40px;transform:scaleX(1.060);transform-origin:right center;">-</span>
<span style="font-size:11.6px;top:221.18px;color:#fff;font-style:italic;left:581.6039999999999px;transform:scaleX(1.005);transform-origin:left center;">No Changes</span>
<span style="font-size:11.6px;top:239.18px;color:#fff;font-weight:700;right:1174.42px;transform:scaleX(1.135);transform-origin:right center;">2020</span>
<span style="font-size:11.6px;top:239.18px;color:#fff;font-weight:700;right:1082.42px;transform:scaleX(1.017);transform-origin:right center;">&lt;&gt;</span>
<span style="font-size:11.6px;top:257.18px;color:#fff;font-weight:700;right:1348.72px;transform:scaleX(0.991);transform-origin:right center;">Constant</span>
<span style="font-size:11.6px;top:257.18px;color:#fff;font-weight:700;left:581.6039999999999px;transform:scaleX(1.055);transform-origin:left center;">Unit</span>
<span style="font-size:11.6px;top:257.18px;color:#fff;font-weight:700;right:1173.42px;transform:scaleX(0.991);transform-origin:right center;">FY Total</span>
<span style="font-size:11.6px;top:257.18px;color:#fff;font-weight:700;right:1082.42px;transform:scaleX(0.991);transform-origin:right center;">FY Total</span>
<span style="font-size:11.6px;top:185.18px;color:#fff;font-weight:700;right:975.42px;transform:scaleX(1.078);transform-origin:right center;">31 Mar 19</span>
<span style="font-size:11.6px;top:203.18px;color:#000;font-weight:700;right:974.42px;transform:scaleX(0.991);transform-origin:right center;">Prior Ops.</span>
<span style="font-size:11.6px;top:221.18px;color:#000;font-weight:700;right:970.02px;transform:scaleX(0.973);transform-origin:right center;">Actuals</span>
<span style="font-size:11.6px;top:239.18px;color:#fff;font-weight:700;right:975.42px;transform:scaleX(1.115);transform-origin:right center;">2019</span>
<span style="font-size:11.6px;top:257.18px;color:#fff;font-weight:700;right:975.72px;transform:scaleX(1.128);transform-origin:right center;">1</span>
<span style="font-size:11.6px;top:185.18px;color:#fff;font-weight:700;right:886.42px;transform:scaleX(1.008);transform-origin:right center;">30 Jun 19</span>
<span style="font-size:11.6px;top:203.18px;color:#000;font-weight:700;right:885.42px;transform:scaleX(0.991);transform-origin:right center;">Prior Ops.</span>
<span style="font-size:11.6px;top:221.18px;color:#000;font-weight:700;right:881.02px;transform:scaleX(0.973);transform-origin:right center;">Actuals</span>
<span style="font-size:11.6px;top:239.18px;color:#fff;font-weight:700;right:886.42px;transform:scaleX(1.115);transform-origin:right center;">2019</span>
<span style="font-size:11.6px;top:257.18px;color:#fff;font-weight:700;right:886.72px;transform:scaleX(1.128);transform-origin:right center;">2</span>
<span style="font-size:11.6px;top:185.18px;color:#fff;font-weight:700;right:797.42px;transform:scaleX(1.033);transform-origin:right center;">30 Sep 19</span>
<span style="font-size:11.6px;top:203.18px;color:#000;font-weight:700;right:796.42px;transform:scaleX(0.991);transform-origin:right center;">Prior Ops.</span>
<span style="font-size:11.6px;top:221.18px;color:#000;font-weight:700;right:792.02px;transform:scaleX(0.973);transform-origin:right center;">Actuals</span>
<span style="font-size:11.6px;top:239.18px;color:#fff;font-weight:700;right:797.42px;transform:scaleX(1.115);transform-origin:right center;">2019</span>
<span style="font-size:11.6px;top:257.18px;color:#fff;font-weight:700;right:797.72px;transform:scaleX(1.128);transform-origin:right center;">3</span>
<span style="font-size:11.6px;top:185.18px;color:#fff;font-weight:700;right:708.42px;transform:scaleX(1.039);transform-origin:right center;">31 Dec 19</span>
<span style="font-size:11.6px;top:203.18px;color:#000;font-weight:700;right:707.42px;transform:scaleX(0.991);transform-origin:right center;">Prior Ops.</span>
<span style="font-size:11.6px;top:221.18px;color:#000;font-weight:700;right:703.02px;transform:scaleX(0.973);transform-origin:right center;">Actuals</span>
<span style="font-size:11.6px;top:239.18px;color:#fff;font-weight:700;right:708.42px;transform:scaleX(1.115);transform-origin:right center;">2019</span>
<span style="font-size:11.6px;top:257.18px;color:#fff;font-weight:700;right:708.72px;transform:scaleX(1.128);transform-origin:right center;">4</span>
<span style="font-size:11.6px;top:185.18px;color:#fff;font-weight:700;right:619.42px;transform:scaleX(1.078);transform-origin:right center;">31 Mar 20</span>
<span style="font-size:11.6px;top:203.18px;color:#000;font-weight:700;right:618.42px;transform:scaleX(1.018);transform-origin:right center;">New Const.</span>
<span style="font-size:11.6px;top:221.18px;color:#000;font-weight:700;right:615.72px;transform:scaleX(0.964);transform-origin:right center;">Forecast</span>
<span style="font-size:11.6px;top:239.18px;color:#fff;font-weight:700;right:619.42px;transform:scaleX(1.115);transform-origin:right center;">2020</span>
<span style="font-size:11.6px;top:257.18px;color:#fff;font-weight:700;right:619.72px;transform:scaleX(1.128);transform-origin:right center;">5</span>
<span style="font-size:11.6px;top:185.18px;color:#fff;font-weight:700;right:530.42px;transform:scaleX(1.008);transform-origin:right center;">30 Jun 20</span>
<span style="font-size:11.6px;top:203.18px;color:#000;font-weight:700;right:529.42px;transform:scaleX(1.018);transform-origin:right center;">New Const.</span>
<span style="font-size:11.6px;top:221.18px;color:#000;font-weight:700;right:526.72px;transform:scaleX(0.964);transform-origin:right center;">Forecast</span>
<span style="font-size:11.6px;top:239.18px;color:#fff;font-weight:700;right:530.42px;transform:scaleX(1.115);transform-origin:right center;">2020</span>
<span style="font-size:11.6px;top:257.18px;color:#fff;font-weight:700;right:530.72px;transform:scaleX(1.128);transform-origin:right center;">6</span>
<span style="font-size:11.6px;top:185.18px;color:#fff;font-weight:700;right:441.42px;transform:scaleX(1.033);transform-origin:right center;">30 Sep 20</span>
<span style="font-size:11.6px;top:203.18px;color:#000;font-weight:700;right:440.42px;transform:scaleX(1.018);transform-origin:right center;">New Const.</span>
<span style="font-size:11.6px;top:221.18px;color:#000;font-weight:700;right:437.72px;transform:scaleX(0.964);transform-origin:right center;">Forecast</span>
<span style="font-size:11.6px;top:239.18px;color:#fff;font-weight:700;right:441.42px;transform:scaleX(1.115);transform-origin:right center;">2020</span>
<span style="font-size:11.6px;top:257.18px;color:#fff;font-weight:700;right:441.72px;transform:scaleX(1.128);transform-origin:right center;">7</span>
<span style="font-size:11.6px;top:185.18px;color:#fff;font-weight:700;right:352.42px;transform:scaleX(1.039);transform-origin:right center;">31 Dec 20</span>
<span style="font-size:11.6px;top:203.18px;color:#000;font-weight:700;right:351.42px;transform:scaleX(1.018);transform-origin:right center;">New Const.</span>
<span style="font-size:11.6px;top:221.18px;color:#000;font-weight:700;right:348.72px;transform:scaleX(0.964);transform-origin:right center;">Forecast</span>
<span style="font-size:11.6px;top:239.18px;color:#fff;font-weight:700;right:352.42px;transform:scaleX(1.115);transform-origin:right center;">2020</span>
<span style="font-size:11.6px;top:257.18px;color:#fff;font-weight:700;right:352.72px;transform:scaleX(1.128);transform-origin:right center;">8</span>
<span style="font-size:11.6px;top:185.18px;color:#fff;font-weight:700;right:263.42px;transform:scaleX(1.078);transform-origin:right center;">31 Mar 21</span>
<span style="font-size:11.6px;top:203.18px;color:#000;font-weight:700;right:261.42px;transform:scaleX(1.008);transform-origin:right center;">Ops.</span>
<span style="font-size:11.6px;top:221.18px;color:#000;font-weight:700;right:259.72px;transform:scaleX(0.964);transform-origin:right center;">Forecast</span>
<span style="font-size:11.6px;top:239.18px;color:#fff;font-weight:700;right:263.42px;transform:scaleX(1.115);transform-origin:right center;">2021</span>
<span style="font-size:11.6px;top:257.18px;color:#fff;font-weight:700;right:263.72px;transform:scaleX(1.128);transform-origin:right center;">9</span>
<span style="font-size:11.6px;top:185.18px;color:#fff;font-weight:700;right:174.42px;transform:scaleX(1.008);transform-origin:right center;">30 Jun 21</span>
<span style="font-size:11.6px;top:203.18px;color:#000;font-weight:700;right:172.42px;transform:scaleX(1.008);transform-origin:right center;">Ops.</span>
<span style="font-size:11.6px;top:221.18px;color:#000;font-weight:700;right:170.72px;transform:scaleX(0.964);transform-origin:right center;">Forecast</span>
<span style="font-size:11.6px;top:239.18px;color:#fff;font-weight:700;right:174.42px;transform:scaleX(1.115);transform-origin:right center;">2021</span>
<span style="font-size:11.6px;top:257.18px;color:#fff;font-weight:700;right:174.72px;transform:scaleX(1.106);transform-origin:right center;">10</span>
<span style="font-size:11.6px;top:185.18px;color:#fff;font-weight:700;right:85.42px;transform:scaleX(1.033);transform-origin:right center;">30 Sep 21</span>
<span style="font-size:11.6px;top:203.18px;color:#000;font-weight:700;right:83.42px;transform:scaleX(1.008);transform-origin:right center;">Ops.</span>
<span style="font-size:11.6px;top:221.18px;color:#000;font-weight:700;right:81.72px;transform:scaleX(0.964);transform-origin:right center;">Forecast</span>
<span style="font-size:11.6px;top:239.18px;color:#fff;font-weight:700;right:85.42px;transform:scaleX(1.115);transform-origin:right center;">2021</span>
<span style="font-size:11.6px;top:257.18px;color:#fff;font-weight:700;right:85.72px;transform:scaleX(1.164);transform-origin:right center;">11</span>
<span style="font-size:11.6px;top:185.18px;color:#fff;font-weight:700;right:-3.58px;transform:scaleX(1.039);transform-origin:right center;">31 Dec 21</span>
<span style="font-size:11.6px;top:203.18px;color:#000;font-weight:700;right:-5.58px;transform:scaleX(1.008);transform-origin:right center;">Ops.</span>
<span style="font-size:11.6px;top:221.18px;color:#000;font-weight:700;right:-7.28px;transform:scaleX(0.964);transform-origin:right center;">Forecast</span>
<span style="font-size:11.6px;top:239.18px;color:#fff;font-weight:700;right:-3.58px;transform:scaleX(1.115);transform-origin:right center;">2021</span>
<span style="font-size:11.6px;top:257.18px;color:#fff;font-weight:700;right:-3.28px;transform:scaleX(1.106);transform-origin:right center;">12</span>
<span style="font-size:11.6px;top:293.18px;color:#fff;font-weight:700;left:69.70400000000001px;transform:scaleX(0.913);transform-origin:left center;">1. CAPITAL EXPENDITURE</span>
<span style="font-size:11.6px;top:329.18px;color:#000;font-weight:700;left:69.70400000000001px;transform:scaleX(0.918);transform-origin:left center;">1.1. CONSTRUCTION COSTS [ CF ]</span>
<span style="font-size:11.6px;top:365.18px;color:#000;font-weight:700;left:79.504px;transform:scaleX(0.992);transform-origin:left center;">1.1.1. Existing terminal Infrastructure additions</span>
<span style="font-size:11.6px;top:383.18px;color:#0000ff;left:109.804px;transform:scaleX(1.084);transform-origin:left center;">Existing terminal Infrastructure - Development</span>
<span style="font-size:11.6px;top:382.38px;color:#0000ff;right:1352.50px;transform:scaleX(1.060);transform-origin:right center;">-</span>
<span style="font-size:11.6px;top:383.18px;color:#0000ff;left:581.6039999999999px;transform:scaleX(0.943);transform-origin:left center;">USD k</span>
<span style="font-size:11.6px;top:382.38px;color:#0000ff;right:1177.00px;transform:scaleX(1.060);transform-origin:right center;">-</span>
<span style="font-size:11.6px;top:382.38px;color:#0000ff;right:1086.00px;transform:scaleX(1.060);transform-origin:right center;">-</span>
<span style="font-size:11.6px;top:382.38px;color:#0000ff;right:1067.00px;transform:scaleX(1.060);transform-origin:right center;">-</span>
<span style="font-size:11.6px;top:382.38px;color:#0000ff;right:978.00px;transform:scaleX(1.060);transform-origin:right center;">-</span>
<span style="font-size:11.6px;top:382.38px;color:#0000ff;right:889.00px;transform:scaleX(1.060);transform-origin:right center;">-</span>
<span style="font-size:11.6px;top:382.38px;color:#0000ff;right:800.00px;transform:scaleX(1.060);transform-origin:right center;">-</span>
<span style="font-size:11.6px;top:382.38px;color:#0000ff;right:711.00px;transform:scaleX(1.060);transform-origin:right center;">-</span>
<span style="font-size:11.6px;top:382.38px;color:#0000ff;right:622.00px;transform:scaleX(1.060);transform-origin:right center;">-</span>
<span style="font-size:11.6px;top:382.38px;color:#0000ff;right:533.00px;transform:scaleX(1.060);transform-origin:right center;">-</span>
<span style="font-size:11.6px;top:382.38px;color:#0000ff;right:444.00px;transform:scaleX(1.060);transform-origin:right center;">-</span>
<span style="font-size:11.6px;top:382.38px;color:#0000ff;right:355.00px;transform:scaleX(1.060);transform-origin:right center;">-</span>
<span style="font-size:11.6px;top:382.38px;color:#0000ff;right:266.00px;transform:scaleX(1.060);transform-origin:right center;">-</span>
<span style="font-size:11.6px;top:382.38px;color:#0000ff;right:177.00px;transform:scaleX(1.060);transform-origin:right center;">-</span>
<span style="font-size:11.6px;top:382.38px;color:#0000ff;right:88.00px;transform:scaleX(1.060);transform-origin:right center;">-</span>
<span style="font-size:11.6px;top:400.18px;color:#0000ff;left:109.804px;transform:scaleX(1.101);transform-origin:left center;">Existing terminal Infrastructure - Civil works</span>
<span style="font-size:11.6px;top:399.38px;color:#0000ff;right:1352.50px;transform:scaleX(1.060);transform-origin:right center;">-</span>
<span style="font-size:11.6px;top:400.18px;color:#0000ff;left:581.6039999999999px;transform:scaleX(0.943);transform-origin:left center;">USD k</span>
<span style="font-size:11.6px;top:399.38px;color:#0000ff;right:1177.00px;transform:scaleX(1.060);transform-origin:right center;">-</span>
<span style="font-size:11.6px;top:399.38px;color:#0000ff;right:1086.00px;transform:scaleX(1.060);transform-origin:right center;">-</span>
<span style="font-size:11.6px;top:399.38px;color:#0000ff;right:1067.00px;transform:scaleX(1.060);transform-origin:right center;">-</span>
<span style="font-size:11.6px;top:399.38px;color:#0000ff;right:978.00px;transform:scaleX(1.060);transform-origin:right center;">-</span>
<span style="font-size:11.6px;top:399.38px;color:#0000ff;right:889.00px;transform:scaleX(1.060);transform-origin:right center;">-</span>
<span style="font-size:11.6px;top:399.38px;color:#0000ff;right:800.00px;transform:scaleX(1.060);transform-origin:right center;">-</span>
<span style="font-size:11.6px;top:399.38px;color:#0000ff;right:711.00px;transform:scaleX(1.060);transform-origin:right center;">-</span>
<span style="font-size:11.6px;top:399.38px;color:#0000ff;right:622.00px;transform:scaleX(1.060);transform-origin:right center;">-</span>
<span style="font-size:11.6px;top:399.38px;color:#0000ff;right:533.00px;transform:scaleX(1.060);transform-origin:right center;">-</span>
<span style="font-size:11.6px;top:399.38px;color:#0000ff;right:444.00px;transform:scaleX(1.060);transform-origin:right center;">-</span>
<span style="font-size:11.6px;top:399.38px;color:#0000ff;right:355.00px;transform:scaleX(1.060);transform-origin:right center;">-</span>
<span style="font-size:11.6px;top:399.38px;color:#0000ff;right:266.00px;transform:scaleX(1.060);transform-origin:right center;">-</span>
<span style="font-size:11.6px;top:399.38px;color:#0000ff;right:177.00px;transform:scaleX(1.060);transform-origin:right center;">-</span>
<span style="font-size:11.6px;top:399.38px;color:#0000ff;right:88.00px;transform:scaleX(1.060);transform-origin:right center;">-</span>
<span style="font-size:11.6px;top:417.18px;color:#0000ff;left:109.804px;transform:scaleX(1.087);transform-origin:left center;">Existing terminal Infrastructure - Refurbishments</span>
<span style="font-size:11.6px;top:416.38px;color:#0000ff;right:1352.50px;transform:scaleX(1.060);transform-origin:right center;">-</span>
<span style="font-size:11.6px;top:417.18px;color:#0000ff;left:581.6039999999999px;transform:scaleX(0.943);transform-origin:left center;">USD k</span>
<span style="font-size:11.6px;top:416.38px;color:#0000ff;right:1177.00px;transform:scaleX(1.060);transform-origin:right center;">-</span>
<span style="font-size:11.6px;top:416.38px;color:#0000ff;right:1086.00px;transform:scaleX(1.060);transform-origin:right center;">-</span>
<span style="font-size:11.6px;top:416.38px;color:#0000ff;right:1067.00px;transform:scaleX(1.060);transform-origin:right center;">-</span>
<span style="font-size:11.6px;top:416.38px;color:#0000ff;right:978.00px;transform:scaleX(1.060);transform-origin:right center;">-</span>
<span style="font-size:11.6px;top:416.38px;color:#0000ff;right:889.00px;transform:scaleX(1.060);transform-origin:right center;">-</span>
<span style="font-size:11.6px;top:416.38px;color:#0000ff;right:800.00px;transform:scaleX(1.060);transform-origin:right center;">-</span>
<span style="font-size:11.6px;top:416.38px;color:#0000ff;right:711.00px;transform:scaleX(1.060);transform-origin:right center;">-</span>
<span style="font-size:11.6px;top:416.38px;color:#0000ff;right:622.00px;transform:scaleX(1.060);transform-origin:right center;">-</span>
<span style="font-size:11.6px;top:416.38px;color:#0000ff;right:533.00px;transform:scaleX(1.060);transform-origin:right center;">-</span>
<span style="font-size:11.6px;top:416.38px;color:#0000ff;right:444.00px;transform:scaleX(1.060);transform-origin:right center;">-</span>
<span style="font-size:11.6px;top:416.38px;color:#0000ff;right:355.00px;transform:scaleX(1.060);transform-origin:right center;">-</span>
<span style="font-size:11.6px;top:416.38px;color:#0000ff;right:266.00px;transform:scaleX(1.060);transform-origin:right center;">-</span>
<span style="font-size:11.6px;top:416.38px;color:#0000ff;right:177.00px;transform:scaleX(1.060);transform-origin:right center;">-</span>
<span style="font-size:11.6px;top:416.38px;color:#0000ff;right:88.00px;transform:scaleX(1.060);transform-origin:right center;">-</span>
<span style="font-size:11.6px;top:440.18px;color:#0000ff;left:109.804px;transform:scaleX(1.086);transform-origin:left center;">Forecast period flag</span>
<span style="font-size:11.6px;top:439.38px;color:#0000ff;right:1352.50px;transform:scaleX(1.060);transform-origin:right center;">-</span>
<span style="font-size:11.6px;top:440.18px;color:#0000ff;left:581.6039999999999px;transform:scaleX(1.191);transform-origin:left center;">flag</span>
<span style="font-size:11.6px;top:440.18px;color:#0000ff;right:1174.70px;transform:scaleX(1.060);transform-origin:right center;">4</span>
<span style="font-size:11.6px;top:440.18px;color:#0000ff;right:1083.70px;transform:scaleX(1.060);transform-origin:right center;">120</span>
<span style="font-size:11.6px;top:439.38px;color:#0000ff;right:1067.00px;transform:scaleX(1.060);transform-origin:right center;">-</span>
<span style="font-size:11.6px;top:439.38px;color:#0000ff;right:978.00px;transform:scaleX(1.060);transform-origin:right center;">-</span>
<span style="font-size:11.6px;top:439.38px;color:#0000ff;right:889.00px;transform:scaleX(1.060);transform-origin:right center;">-</span>
<span style="font-size:11.6px;top:439.38px;color:#0000ff;right:800.00px;transform:scaleX(1.060);transform-origin:right center;">-</span>
<span style="font-size:11.6px;top:439.38px;color:#0000ff;right:711.00px;transform:scaleX(1.060);transform-origin:right center;">-</span>
<span style="font-size:11.6px;top:440.18px;color:#0000ff;right:619.70px;transform:scaleX(1.060);transform-origin:right center;">1</span>
<span style="font-size:11.6px;top:440.18px;color:#0000ff;right:530.70px;transform:scaleX(1.060);transform-origin:right center;">1</span>
<span style="font-size:11.6px;top:440.18px;color:#0000ff;right:441.70px;transform:scaleX(1.060);transform-origin:right center;">1</span>
<span style="font-size:11.6px;top:440.18px;color:#0000ff;right:352.70px;transform:scaleX(1.060);transform-origin:right center;">1</span>
<span style="font-size:11.6px;top:440.18px;color:#0000ff;right:263.70px;transform:scaleX(1.060);transform-origin:right center;">1</span>
<span style="font-size:11.6px;top:440.18px;color:#0000ff;right:174.70px;transform:scaleX(1.060);transform-origin:right center;">1</span>
<span style="font-size:11.6px;top:440.18px;color:#0000ff;right:85.70px;transform:scaleX(1.060);transform-origin:right center;">1</span>
<span style="font-size:11.6px;top:463.18px;color:#000;left:109.804px;transform:scaleX(1.084);transform-origin:left center;">Existing terminal Infrastructure - Development</span>
<span style="font-size:11.6px;top:463.18px;color:#000;left:581.6039999999999px;transform:scaleX(0.943);transform-origin:left center;">USD k</span>
<span style="font-size:11.6px;top:462.38px;color:#000;right:1177.00px;transform:scaleX(1.060);transform-origin:right center;">-</span>
<span style="font-size:11.6px;top:462.38px;color:#000;right:1086.00px;transform:scaleX(1.060);transform-origin:right center;">-</span>
<span style="font-size:11.6px;top:462.38px;color:#000;right:978.00px;transform:scaleX(1.060);transform-origin:right center;">-</span>
<span style="font-size:11.6px;top:462.38px;color:#000;right:889.00px;transform:scaleX(1.060);transform-origin:right center;">-</span>
<span style="font-size:11.6px;top:462.38px;color:#000;right:800.00px;transform:scaleX(1.060);transform-origin:right center;">-</span>
<span style="font-size:11.6px;top:462.38px;color:#000;right:711.00px;transform:scaleX(1.060);transform-origin:right center;">-</span>
<span style="font-size:11.6px;top:462.38px;color:#000;right:622.00px;transform:scaleX(1.060);transform-origin:right center;">-</span>
<span style="font-size:11.6px;top:462.38px;color:#000;right:533.00px;transform:scaleX(1.060);transform-origin:right center;">-</span>
<span style="font-size:11.6px;top:462.38px;color:#000;right:444.00px;transform:scaleX(1.060);transform-origin:right center;">-</span>
<span style="font-size:11.6px;top:462.38px;color:#000;right:355.00px;transform:scaleX(1.060);transform-origin:right center;">-</span>
<span style="font-size:11.6px;top:462.38px;color:#000;right:266.00px;transform:scaleX(1.060);transform-origin:right center;">-</span>
<span style="font-size:11.6px;top:462.38px;color:#000;right:177.00px;transform:scaleX(1.060);transform-origin:right center;">-</span>
<span style="font-size:11.6px;top:462.38px;color:#000;right:88.00px;transform:scaleX(1.060);transform-origin:right center;">-</span>
<span style="font-size:11.6px;top:480.18px;color:#000;left:109.804px;transform:scaleX(1.101);transform-origin:left center;">Existing terminal Infrastructure - Civil works</span>
<span style="font-size:11.6px;top:480.18px;color:#000;left:581.6039999999999px;transform:scaleX(0.943);transform-origin:left center;">USD k</span>
<span style="font-size:11.6px;top:479.38px;color:#000;right:1177.00px;transform:scaleX(1.060);transform-origin:right center;">-</span>
<span style="font-size:11.6px;top:479.38px;color:#000;right:1086.00px;transform:scaleX(1.060);transform-origin:right center;">-</span>
<span style="font-size:11.6px;top:479.38px;color:#000;right:978.00px;transform:scaleX(1.060);transform-origin:right center;">-</span>
<span style="font-size:11.6px;top:479.38px;color:#000;right:889.00px;transform:scaleX(1.060);transform-origin:right center;">-</span>
<span style="font-size:11.6px;top:479.38px;color:#000;right:800.00px;transform:scaleX(1.060);transform-origin:right center;">-</span>
<span style="font-size:11.6px;top:479.38px;color:#000;right:711.00px;transform:scaleX(1.060);transform-origin:right center;">-</span>
<span style="font-size:11.6px;top:479.38px;color:#000;right:622.00px;transform:scaleX(1.060);transform-origin:right center;">-</span>
<span style="font-size:11.6px;top:479.38px;color:#000;right:533.00px;transform:scaleX(1.060);transform-origin:right center;">-</span>
<span style="font-size:11.6px;top:479.38px;color:#000;right:444.00px;transform:scaleX(1.060);transform-origin:right center;">-</span>
<span style="font-size:11.6px;top:479.38px;color:#000;right:355.00px;transform:scaleX(1.060);transform-origin:right center;">-</span>
<span style="font-size:11.6px;top:479.38px;color:#000;right:266.00px;transform:scaleX(1.060);transform-origin:right center;">-</span>
<span style="font-size:11.6px;top:479.38px;color:#000;right:177.00px;transform:scaleX(1.060);transform-origin:right center;">-</span>
<span style="font-size:11.6px;top:479.38px;color:#000;right:88.00px;transform:scaleX(1.060);transform-origin:right center;">-</span>
<span style="font-size:11.6px;top:497.18px;color:#000;left:109.804px;transform:scaleX(1.087);transform-origin:left center;">Existing terminal Infrastructure - Refurbishments</span>
<span style="font-size:11.6px;top:497.18px;color:#000;left:581.6039999999999px;transform:scaleX(0.943);transform-origin:left center;">USD k</span>
<span style="font-size:11.6px;top:496.38px;color:#000;right:1177.00px;transform:scaleX(1.060);transform-origin:right center;">-</span>
<span style="font-size:11.6px;top:496.38px;color:#000;right:1086.00px;transform:scaleX(1.060);transform-origin:right center;">-</span>
<span style="font-size:11.6px;top:496.38px;color:#000;right:978.00px;transform:scaleX(1.060);transform-origin:right center;">-</span>
<span style="font-size:11.6px;top:496.38px;color:#000;right:889.00px;transform:scaleX(1.060);transform-origin:right center;">-</span>
<span style="font-size:11.6px;top:496.38px;color:#000;right:800.00px;transform:scaleX(1.060);transform-origin:right center;">-</span>
<span style="font-size:11.6px;top:496.38px;color:#000;right:711.00px;transform:scaleX(1.060);transform-origin:right center;">-</span>
<span style="font-size:11.6px;top:496.38px;color:#000;right:622.00px;transform:scaleX(1.060);transform-origin:right center;">-</span>
<span style="font-size:11.6px;top:496.38px;color:#000;right:533.00px;transform:scaleX(1.060);transform-origin:right center;">-</span>
<span style="font-size:11.6px;top:496.38px;color:#000;right:444.00px;transform:scaleX(1.060);transform-origin:right center;">-</span>
<span style="font-size:11.6px;top:496.38px;color:#000;right:355.00px;transform:scaleX(1.060);transform-origin:right center;">-</span>
<span style="font-size:11.6px;top:496.38px;color:#000;right:266.00px;transform:scaleX(1.060);transform-origin:right center;">-</span>
<span style="font-size:11.6px;top:496.38px;color:#000;right:177.00px;transform:scaleX(1.060);transform-origin:right center;">-</span>
<span style="font-size:11.6px;top:496.38px;color:#000;right:88.00px;transform:scaleX(1.060);transform-origin:right center;">-</span>
<span style="font-size:11.6px;top:520.18px;color:#000;left:109.804px;transform:scaleX(1.106);transform-origin:left center;">Existing terminal Infrastructure additions [F]</span>
<span style="font-size:11.6px;top:520.18px;color:#000;left:581.6039999999999px;transform:scaleX(0.943);transform-origin:left center;">USD k</span>
<span style="font-size:11.6px;top:519.38px;color:#000;right:1177.00px;transform:scaleX(1.060);transform-origin:right center;">-</span>
<span style="font-size:11.6px;top:519.38px;color:#000;right:1086.00px;transform:scaleX(1.060);transform-origin:right center;">-</span>
<span style="font-size:11.6px;top:519.38px;color:#000;right:978.00px;transform:scaleX(1.060);transform-origin:right center;">-</span>
<span style="font-size:11.6px;top:519.38px;color:#000;right:889.00px;transform:scaleX(1.060);transform-origin:right center;">-</span>
<span style="font-size:11.6px;top:519.38px;color:#000;right:800.00px;transform:scaleX(1.060);transform-origin:right center;">-</span>
<span style="font-size:11.6px;top:519.38px;color:#000;right:711.00px;transform:scaleX(1.060);transform-origin:right center;">-</span>
<span style="font-size:11.6px;top:519.38px;color:#000;right:622.00px;transform:scaleX(1.060);transform-origin:right center;">-</span>
<span style="font-size:11.6px;top:519.38px;color:#000;right:533.00px;transform:scaleX(1.060);transform-origin:right center;">-</span>
<span style="font-size:11.6px;top:519.38px;color:#000;right:444.00px;transform:scaleX(1.060);transform-origin:right center;">-</span>
<span style="font-size:11.6px;top:519.38px;color:#000;right:355.00px;transform:scaleX(1.060);transform-origin:right center;">-</span>
<span style="font-size:11.6px;top:519.38px;color:#000;right:266.00px;transform:scaleX(1.060);transform-origin:right center;">-</span>
<span style="font-size:11.6px;top:519.38px;color:#000;right:177.00px;transform:scaleX(1.060);transform-origin:right center;">-</span>
<span style="font-size:11.6px;top:519.38px;color:#000;right:88.00px;transform:scaleX(1.060);transform-origin:right center;">-</span>
<span style="font-size:11.6px;top:553.88px;color:#000;left:86.604px;transform:scaleX(1.011);transform-origin:left center;"> A&amp;F </span>
<span style="font-size:11.6px;top:571.18px;color:#0000ff;left:109.804px;transform:scaleX(1.108);transform-origin:left center;">Existing terminal Infrastructure additions [A]</span>
<span style="font-size:11.6px;top:570.38px;color:#0000ff;right:1352.50px;transform:scaleX(1.060);transform-origin:right center;">-</span>
<span style="font-size:11.6px;top:571.18px;color:#0000ff;left:581.6039999999999px;transform:scaleX(0.943);transform-origin:left center;">USD k</span>
<span style="font-size:11.6px;top:570.38px;color:#0000ff;right:1177.00px;transform:scaleX(1.060);transform-origin:right center;">-</span>
<span style="font-size:11.6px;top:570.38px;color:#0000ff;right:1086.00px;transform:scaleX(1.060);transform-origin:right center;">-</span>
<span style="font-size:11.6px;top:570.38px;color:#0000ff;right:1067.00px;transform:scaleX(1.060);transform-origin:right center;">-</span>
<span style="font-size:11.6px;top:570.38px;color:#0000ff;right:978.00px;transform:scaleX(1.060);transform-origin:right center;">-</span>
<span style="font-size:11.6px;top:570.38px;color:#0000ff;right:889.00px;transform:scaleX(1.060);transform-origin:right center;">-</span>
<span style="font-size:11.6px;top:570.38px;color:#0000ff;right:800.00px;transform:scaleX(1.060);transform-origin:right center;">-</span>
<span style="font-size:11.6px;top:570.38px;color:#0000ff;right:711.00px;transform:scaleX(1.060);transform-origin:right center;">-</span>
<span style="font-size:11.6px;top:570.38px;color:#0000ff;right:622.00px;transform:scaleX(1.060);transform-origin:right center;">-</span>
<span style="font-size:11.6px;top:570.38px;color:#0000ff;right:533.00px;transform:scaleX(1.060);transform-origin:right center;">-</span>
<span style="font-size:11.6px;top:570.38px;color:#0000ff;right:444.00px;transform:scaleX(1.060);transform-origin:right center;">-</span>
<span style="font-size:11.6px;top:570.38px;color:#0000ff;right:355.00px;transform:scaleX(1.060);transform-origin:right center;">-</span>
<span style="font-size:11.6px;top:570.38px;color:#0000ff;right:266.00px;transform:scaleX(1.060);transform-origin:right center;">-</span>
<span style="font-size:11.6px;top:570.38px;color:#0000ff;right:177.00px;transform:scaleX(1.060);transform-origin:right center;">-</span>
<span style="font-size:11.6px;top:570.38px;color:#0000ff;right:88.00px;transform:scaleX(1.060);transform-origin:right center;">-</span>
<span style="font-size:11.6px;top:588.18px;color:#0000ff;left:109.804px;transform:scaleX(1.100);transform-origin:left center;">Actuals period flag</span>
<span style="font-size:11.6px;top:587.38px;color:#0000ff;right:1352.50px;transform:scaleX(1.060);transform-origin:right center;">-</span>
<span style="font-size:11.6px;top:588.18px;color:#0000ff;left:581.6039999999999px;transform:scaleX(1.191);transform-origin:left center;">flag</span>
<span style="font-size:11.6px;top:587.38px;color:#0000ff;right:1177.00px;transform:scaleX(1.060);transform-origin:right center;">-</span>
<span style="font-size:11.6px;top:588.18px;color:#0000ff;right:1083.70px;transform:scaleX(1.060);transform-origin:right center;">4</span>
<span style="font-size:11.6px;top:587.38px;color:#0000ff;right:1067.00px;transform:scaleX(1.060);transform-origin:right center;">-</span>
<span style="font-size:11.6px;top:588.18px;color:#0000ff;right:975.70px;transform:scaleX(1.060);transform-origin:right center;">1</span>
<span style="font-size:11.6px;top:588.18px;color:#0000ff;right:886.70px;transform:scaleX(1.060);transform-origin:right center;">1</span>
<span style="font-size:11.6px;top:588.18px;color:#0000ff;right:797.70px;transform:scaleX(1.060);transform-origin:right center;">1</span>
<span style="font-size:11.6px;top:588.18px;color:#0000ff;right:708.70px;transform:scaleX(1.060);transform-origin:right center;">1</span>
<span style="font-size:11.6px;top:587.38px;color:#0000ff;right:622.00px;transform:scaleX(1.060);transform-origin:right center;">-</span>
<span style="font-size:11.6px;top:587.38px;color:#0000ff;right:533.00px;transform:scaleX(1.060);transform-origin:right center;">-</span>
<span style="font-size:11.6px;top:587.38px;color:#0000ff;right:444.00px;transform:scaleX(1.060);transform-origin:right center;">-</span>
<span style="font-size:11.6px;top:587.38px;color:#0000ff;right:355.00px;transform:scaleX(1.060);transform-origin:right center;">-</span>
<span style="font-size:11.6px;top:587.38px;color:#0000ff;right:266.00px;transform:scaleX(1.060);transform-origin:right center;">-</span>
<span style="font-size:11.6px;top:587.38px;color:#0000ff;right:177.00px;transform:scaleX(1.060);transform-origin:right center;">-</span>
<span style="font-size:11.6px;top:587.38px;color:#0000ff;right:88.00px;transform:scaleX(1.060);transform-origin:right center;">-</span>
<span style="font-size:11.6px;top:605.18px;color:#000;left:109.804px;transform:scaleX(1.106);transform-origin:left center;">Existing terminal Infrastructure additions [F]</span>
<span style="font-size:11.6px;top:604.38px;color:#000;right:1352.50px;transform:scaleX(1.060);transform-origin:right center;">-</span>
<span style="font-size:11.6px;top:605.18px;color:#000;left:581.6039999999999px;transform:scaleX(0.943);transform-origin:left center;">USD k</span>
<span style="font-size:11.6px;top:604.38px;color:#000;right:1177.00px;transform:scaleX(1.060);transform-origin:right center;">-</span>
<span style="font-size:11.6px;top:604.38px;color:#000;right:1086.00px;transform:scaleX(1.060);transform-origin:right center;">-</span>
<span style="font-size:11.6px;top:604.38px;color:#000;right:1067.00px;transform:scaleX(1.060);transform-origin:right center;">-</span>
<span style="font-size:11.6px;top:604.38px;color:#000;right:978.00px;transform:scaleX(1.060);transform-origin:right center;">-</span>
<span style="font-size:11.6px;top:604.38px;color:#000;right:889.00px;transform:scaleX(1.060);transform-origin:right center;">-</span>
<span style="font-size:11.6px;top:604.38px;color:#000;right:800.00px;transform:scaleX(1.060);transform-origin:right center;">-</span>
<span style="font-size:11.6px;top:604.38px;color:#000;right:711.00px;transform:scaleX(1.060);transform-origin:right center;">-</span>
<span style="font-size:11.6px;top:604.38px;color:#000;right:622.00px;transform:scaleX(1.060);transform-origin:right center;">-</span>
<span style="font-size:11.6px;top:604.38px;color:#000;right:533.00px;transform:scaleX(1.060);transform-origin:right center;">-</span>
<span style="font-size:11.6px;top:604.38px;color:#000;right:444.00px;transform:scaleX(1.060);transform-origin:right center;">-</span>
<span style="font-size:11.6px;top:604.38px;color:#000;right:355.00px;transform:scaleX(1.060);transform-origin:right center;">-</span>
<span style="font-size:11.6px;top:604.38px;color:#000;right:266.00px;transform:scaleX(1.060);transform-origin:right center;">-</span>
<span style="font-size:11.6px;top:604.38px;color:#000;right:177.00px;transform:scaleX(1.060);transform-origin:right center;">-</span>
<span style="font-size:11.6px;top:604.38px;color:#000;right:88.00px;transform:scaleX(1.060);transform-origin:right center;">-</span>
<span style="font-size:11.6px;top:622.18px;color:#ff0000;left:109.804px;transform:scaleX(1.112);transform-origin:left center;">Existing terminal Infrastructure additions</span>
<span style="font-size:11.6px;top:622.18px;color:#ff0000;left:581.6039999999999px;transform:scaleX(0.943);transform-origin:left center;">USD k</span>
<span style="font-size:11.6px;top:621.38px;color:#ff0000;right:1177.00px;transform:scaleX(1.060);transform-origin:right center;">-</span>
<span style="font-size:11.6px;top:621.38px;color:#ff0000;right:1086.00px;transform:scaleX(1.060);transform-origin:right center;">-</span>
<span style="font-size:11.6px;top:621.38px;color:#ff0000;right:978.00px;transform:scaleX(1.060);transform-origin:right center;">-</span>
<span style="font-size:11.6px;top:621.38px;color:#ff0000;right:889.00px;transform:scaleX(1.060);transform-origin:right center;">-</span>
<span style="font-size:11.6px;top:621.38px;color:#ff0000;right:800.00px;transform:scaleX(1.060);transform-origin:right center;">-</span>
<span style="font-size:11.6px;top:621.38px;color:#ff0000;right:711.00px;transform:scaleX(1.060);transform-origin:right center;">-</span>
<span style="font-size:11.6px;top:621.38px;color:#ff0000;right:622.00px;transform:scaleX(1.060);transform-origin:right center;">-</span>
<span style="font-size:11.6px;top:621.38px;color:#ff0000;right:533.00px;transform:scaleX(1.060);transform-origin:right center;">-</span>
<span style="font-size:11.6px;top:621.38px;color:#ff0000;right:444.00px;transform:scaleX(1.060);transform-origin:right center;">-</span>
<span style="font-size:11.6px;top:621.38px;color:#ff0000;right:355.00px;transform:scaleX(1.060);transform-origin:right center;">-</span>
<span style="font-size:11.6px;top:621.38px;color:#ff0000;right:266.00px;transform:scaleX(1.060);transform-origin:right center;">-</span>
<span style="font-size:11.6px;top:621.38px;color:#ff0000;right:177.00px;transform:scaleX(1.060);transform-origin:right center;">-</span>
<span style="font-size:11.6px;top:621.38px;color:#ff0000;right:88.00px;transform:scaleX(1.060);transform-origin:right center;">-</span>
<span style="font-size:11.6px;top:657.18px;color:#000;font-weight:700;left:79.504px;transform:scaleX(0.968);transform-origin:left center;">1.1.2. Existing terminal Buildings additions</span>
<span style="font-size:11.6px;top:675.18px;color:#0000ff;left:109.804px;transform:scaleX(1.075);transform-origin:left center;">Existing terminal Buildings - Development</span>
<span style="font-size:11.6px;top:674.38px;color:#0000ff;right:1352.50px;transform:scaleX(1.060);transform-origin:right center;">-</span>
<span style="font-size:11.6px;top:675.18px;color:#0000ff;left:581.6039999999999px;transform:scaleX(0.943);transform-origin:left center;">USD k</span>
<span style="font-size:11.6px;top:674.38px;color:#0000ff;right:1177.00px;transform:scaleX(1.060);transform-origin:right center;">-</span>
<span style="font-size:11.6px;top:674.38px;color:#0000ff;right:1086.00px;transform:scaleX(1.060);transform-origin:right center;">-</span>
<span style="font-size:11.6px;top:674.38px;color:#0000ff;right:1067.00px;transform:scaleX(1.060);transform-origin:right center;">-</span>
<span style="font-size:11.6px;top:674.38px;color:#0000ff;right:978.00px;transform:scaleX(1.060);transform-origin:right center;">-</span>
<span style="font-size:11.6px;top:674.38px;color:#0000ff;right:889.00px;transform:scaleX(1.060);transform-origin:right center;">-</span>
<span style="font-size:11.6px;top:674.38px;color:#0000ff;right:800.00px;transform:scaleX(1.060);transform-origin:right center;">-</span>
<span style="font-size:11.6px;top:674.38px;color:#0000ff;right:711.00px;transform:scaleX(1.060);transform-origin:right center;">-</span>
<span style="font-size:11.6px;top:674.38px;color:#0000ff;right:622.00px;transform:scaleX(1.060);transform-origin:right center;">-</span>
<span style="font-size:11.6px;top:674.38px;color:#0000ff;right:533.00px;transform:scaleX(1.060);transform-origin:right center;">-</span>
<span style="font-size:11.6px;top:674.38px;color:#0000ff;right:444.00px;transform:scaleX(1.060);transform-origin:right center;">-</span>
<span style="font-size:11.6px;top:674.38px;color:#0000ff;right:355.00px;transform:scaleX(1.060);transform-origin:right center;">-</span>
<span style="font-size:11.6px;top:674.38px;color:#0000ff;right:266.00px;transform:scaleX(1.060);transform-origin:right center;">-</span>
<span style="font-size:11.6px;top:674.38px;color:#0000ff;right:177.00px;transform:scaleX(1.060);transform-origin:right center;">-</span>
<span style="font-size:11.6px;top:674.38px;color:#0000ff;right:88.00px;transform:scaleX(1.060);transform-origin:right center;">-</span>
<span style="font-size:11.6px;top:692.18px;color:#0000ff;left:109.804px;transform:scaleX(1.093);transform-origin:left center;">Existing terminal Buildings - Civil works</span>
<span style="font-size:11.6px;top:691.38px;color:#0000ff;right:1352.50px;transform:scaleX(1.060);transform-origin:right center;">-</span>
<span style="font-size:11.6px;top:692.18px;color:#0000ff;left:581.6039999999999px;transform:scaleX(0.943);transform-origin:left center;">USD k</span>
<span style="font-size:11.6px;top:691.38px;color:#0000ff;right:1177.00px;transform:scaleX(1.060);transform-origin:right center;">-</span>
<span style="font-size:11.6px;top:691.38px;color:#0000ff;right:1086.00px;transform:scaleX(1.060);transform-origin:right center;">-</span>
<span style="font-size:11.6px;top:691.38px;color:#0000ff;right:1067.00px;transform:scaleX(1.060);transform-origin:right center;">-</span>
<span style="font-size:11.6px;top:691.38px;color:#0000ff;right:978.00px;transform:scaleX(1.060);transform-origin:right center;">-</span>
<span style="font-size:11.6px;top:691.38px;color:#0000ff;right:889.00px;transform:scaleX(1.060);transform-origin:right center;">-</span>
<span style="font-size:11.6px;top:691.38px;color:#0000ff;right:800.00px;transform:scaleX(1.060);transform-origin:right center;">-</span>
<span style="font-size:11.6px;top:691.38px;color:#0000ff;right:711.00px;transform:scaleX(1.060);transform-origin:right center;">-</span>
<span style="font-size:11.6px;top:691.38px;color:#0000ff;right:622.00px;transform:scaleX(1.060);transform-origin:right center;">-</span>
<span style="font-size:11.6px;top:691.38px;color:#0000ff;right:533.00px;transform:scaleX(1.060);transform-origin:right center;">-</span>
<span style="font-size:11.6px;top:691.38px;color:#0000ff;right:444.00px;transform:scaleX(1.060);transform-origin:right center;">-</span>
<span style="font-size:11.6px;top:691.38px;color:#0000ff;right:355.00px;transform:scaleX(1.060);transform-origin:right center;">-</span>
<span style="font-size:11.6px;top:691.38px;color:#0000ff;right:266.00px;transform:scaleX(1.060);transform-origin:right center;">-</span>
<span style="font-size:11.6px;top:691.38px;color:#0000ff;right:177.00px;transform:scaleX(1.060);transform-origin:right center;">-</span>
<span style="font-size:11.6px;top:691.38px;color:#0000ff;right:88.00px;transform:scaleX(1.060);transform-origin:right center;">-</span>
<span style="font-size:11.6px;top:709.18px;color:#0000ff;left:109.804px;transform:scaleX(1.079);transform-origin:left center;">Existing terminal Buildings - Refurbishments</span>
<span style="font-size:11.6px;top:708.38px;color:#0000ff;right:1352.50px;transform:scaleX(1.060);transform-origin:right center;">-</span>
<span style="font-size:11.6px;top:709.18px;color:#0000ff;left:581.6039999999999px;transform:scaleX(0.943);transform-origin:left center;">USD k</span>
<span style="font-size:11.6px;top:708.38px;color:#0000ff;right:1177.00px;transform:scaleX(1.060);transform-origin:right center;">-</span>
<span style="font-size:11.6px;top:708.38px;color:#0000ff;right:1086.00px;transform:scaleX(1.060);transform-origin:right center;">-</span>
<span style="font-size:11.6px;top:708.38px;color:#0000ff;right:1067.00px;transform:scaleX(1.060);transform-origin:right center;">-</span>
<span style="font-size:11.6px;top:708.38px;color:#0000ff;right:978.00px;transform:scaleX(1.060);transform-origin:right center;">-</span>
<span style="font-size:11.6px;top:708.38px;color:#0000ff;right:889.00px;transform:scaleX(1.060);transform-origin:right center;">-</span>
<span style="font-size:11.6px;top:708.38px;color:#0000ff;right:800.00px;transform:scaleX(1.060);transform-origin:right center;">-</span>
<span style="font-size:11.6px;top:708.38px;color:#0000ff;right:711.00px;transform:scaleX(1.060);transform-origin:right center;">-</span>
<span style="font-size:11.6px;top:708.38px;color:#0000ff;right:622.00px;transform:scaleX(1.060);transform-origin:right center;">-</span>
<span style="font-size:11.6px;top:708.38px;color:#0000ff;right:533.00px;transform:scaleX(1.060);transform-origin:right center;">-</span>
<span style="font-size:11.6px;top:708.38px;color:#0000ff;right:444.00px;transform:scaleX(1.060);transform-origin:right center;">-</span>
<span style="font-size:11.6px;top:708.38px;color:#0000ff;right:355.00px;transform:scaleX(1.060);transform-origin:right center;">-</span>
<span style="font-size:11.6px;top:708.38px;color:#0000ff;right:266.00px;transform:scaleX(1.060);transform-origin:right center;">-</span>
<span style="font-size:11.6px;top:708.38px;color:#0000ff;right:177.00px;transform:scaleX(1.060);transform-origin:right center;">-</span>
<span style="font-size:11.6px;top:708.38px;color:#0000ff;right:88.00px;transform:scaleX(1.060);transform-origin:right center;">-</span>
<span style="font-size:11.6px;top:732.18px;color:#0000ff;left:109.804px;transform:scaleX(1.086);transform-origin:left center;">Forecast period flag</span>
<span style="font-size:11.6px;top:731.38px;color:#0000ff;right:1352.50px;transform:scaleX(1.060);transform-origin:right center;">-</span>
<span style="font-size:11.6px;top:732.18px;color:#0000ff;left:581.6039999999999px;transform:scaleX(1.191);transform-origin:left center;">flag</span>
<span style="font-size:11.6px;top:732.18px;color:#0000ff;right:1174.70px;transform:scaleX(1.060);transform-origin:right center;">4</span>
<span style="font-size:11.6px;top:732.18px;color:#0000ff;right:1083.70px;transform:scaleX(1.060);transform-origin:right center;">120</span>
<span style="font-size:11.6px;top:731.38px;color:#0000ff;right:1067.00px;transform:scaleX(1.060);transform-origin:right center;">-</span>
<span style="font-size:11.6px;top:731.38px;color:#0000ff;right:978.00px;transform:scaleX(1.060);transform-origin:right center;">-</span>
<span style="font-size:11.6px;top:731.38px;color:#0000ff;right:889.00px;transform:scaleX(1.060);transform-origin:right center;">-</span>
<span style="font-size:11.6px;top:731.38px;color:#0000ff;right:800.00px;transform:scaleX(1.060);transform-origin:right center;">-</span>
<span style="font-size:11.6px;top:731.38px;color:#0000ff;right:711.00px;transform:scaleX(1.060);transform-origin:right center;">-</span>
<span style="font-size:11.6px;top:732.18px;color:#0000ff;right:619.70px;transform:scaleX(1.060);transform-origin:right center;">1</span>
<span style="font-size:11.6px;top:732.18px;color:#0000ff;right:530.70px;transform:scaleX(1.060);transform-origin:right center;">1</span>
<span style="font-size:11.6px;top:732.18px;color:#0000ff;right:441.70px;transform:scaleX(1.060);transform-origin:right center;">1</span>
<span style="font-size:11.6px;top:732.18px;color:#0000ff;right:352.70px;transform:scaleX(1.060);transform-origin:right center;">1</span>
<span style="font-size:11.6px;top:732.18px;color:#0000ff;right:263.70px;transform:scaleX(1.060);transform-origin:right center;">1</span>
<span style="font-size:11.6px;top:732.18px;color:#0000ff;right:174.70px;transform:scaleX(1.060);transform-origin:right center;">1</span>
<span style="font-size:11.6px;top:732.18px;color:#0000ff;right:85.70px;transform:scaleX(1.060);transform-origin:right center;">1</span>
<span style="font-size:11.6px;top:755.18px;color:#000;left:109.804px;transform:scaleX(1.075);transform-origin:left center;">Existing terminal Buildings - Development</span>
<span style="font-size:11.6px;top:755.18px;color:#000;left:581.6039999999999px;transform:scaleX(0.943);transform-origin:left center;">USD k</span>
<span style="font-size:11.6px;top:754.38px;color:#000;right:1177.00px;transform:scaleX(1.060);transform-origin:right center;">-</span>
<span style="font-size:11.6px;top:754.38px;color:#000;right:1086.00px;transform:scaleX(1.060);transform-origin:right center;">-</span>
<span style="font-size:11.6px;top:754.38px;color:#000;right:978.00px;transform:scaleX(1.060);transform-origin:right center;">-</span>
<span style="font-size:11.6px;top:754.38px;color:#000;right:889.00px;transform:scaleX(1.060);transform-origin:right center;">-</span>
<span style="font-size:11.6px;top:754.38px;color:#000;right:800.00px;transform:scaleX(1.060);transform-origin:right center;">-</span>
<span style="font-size:11.6px;top:754.38px;color:#000;right:711.00px;transform:scaleX(1.060);transform-origin:right center;">-</span>
<span style="font-size:11.6px;top:754.38px;color:#000;right:622.00px;transform:scaleX(1.060);transform-origin:right center;">-</span>
<span style="font-size:11.6px;top:754.38px;color:#000;right:533.00px;transform:scaleX(1.060);transform-origin:right center;">-</span>
<span style="font-size:11.6px;top:754.38px;color:#000;right:444.00px;transform:scaleX(1.060);transform-origin:right center;">-</span>
<span style="font-size:11.6px;top:754.38px;color:#000;right:355.00px;transform:scaleX(1.060);transform-origin:right center;">-</span>
<span style="font-size:11.6px;top:754.38px;color:#000;right:266.00px;transform:scaleX(1.060);transform-origin:right center;">-</span>
<span style="font-size:11.6px;top:754.38px;color:#000;right:177.00px;transform:scaleX(1.060);transform-origin:right center;">-</span>
<span style="font-size:11.6px;top:754.38px;color:#000;right:88.00px;transform:scaleX(1.060);transform-origin:right center;">-</span>
<span style="font-size:11.6px;top:772.18px;color:#000;left:109.804px;transform:scaleX(1.093);transform-origin:left center;">Existing terminal Buildings - Civil works</span>
<span style="font-size:11.6px;top:772.18px;color:#000;left:581.6039999999999px;transform:scaleX(0.943);transform-origin:left center;">USD k</span>
<span style="font-size:11.6px;top:771.38px;color:#000;right:1177.00px;transform:scaleX(1.060);transform-origin:right center;">-</span>
<span style="font-size:11.6px;top:771.38px;color:#000;right:1086.00px;transform:scaleX(1.060);transform-origin:right center;">-</span>
<span style="font-size:11.6px;top:771.38px;color:#000;right:978.00px;transform:scaleX(1.060);transform-origin:right center;">-</span>
<span style="font-size:11.6px;top:771.38px;color:#000;right:889.00px;transform:scaleX(1.060);transform-origin:right center;">-</span>
<span style="font-size:11.6px;top:771.38px;color:#000;right:800.00px;transform:scaleX(1.060);transform-origin:right center;">-</span>
<span style="font-size:11.6px;top:771.38px;color:#000;right:711.00px;transform:scaleX(1.060);transform-origin:right center;">-</span>
<span style="font-size:11.6px;top:771.38px;color:#000;right:622.00px;transform:scaleX(1.060);transform-origin:right center;">-</span>
<span style="font-size:11.6px;top:771.38px;color:#000;right:533.00px;transform:scaleX(1.060);transform-origin:right center;">-</span>
<span style="font-size:11.6px;top:771.38px;color:#000;right:444.00px;transform:scaleX(1.060);transform-origin:right center;">-</span>
<span style="font-size:11.6px;top:771.38px;color:#000;right:355.00px;transform:scaleX(1.060);transform-origin:right center;">-</span>
<span style="font-size:11.6px;top:771.38px;color:#000;right:266.00px;transform:scaleX(1.060);transform-origin:right center;">-</span>
<span style="font-size:11.6px;top:771.38px;color:#000;right:177.00px;transform:scaleX(1.060);transform-origin:right center;">-</span>
<span style="font-size:11.6px;top:771.38px;color:#000;right:88.00px;transform:scaleX(1.060);transform-origin:right center;">-</span>
<span style="font-size:11.6px;top:789.18px;color:#000;left:109.804px;transform:scaleX(1.079);transform-origin:left center;">Existing terminal Buildings - Refurbishments</span>
<span style="font-size:11.6px;top:789.18px;color:#000;left:581.6039999999999px;transform:scaleX(0.943);transform-origin:left center;">USD k</span>
<span style="font-size:11.6px;top:788.38px;color:#000;right:1177.00px;transform:scaleX(1.060);transform-origin:right center;">-</span>
<span style="font-size:11.6px;top:788.38px;color:#000;right:1086.00px;transform:scaleX(1.060);transform-origin:right center;">-</span>
<span style="font-size:11.6px;top:788.38px;color:#000;right:978.00px;transform:scaleX(1.060);transform-origin:right center;">-</span>
<span style="font-size:11.6px;top:788.38px;color:#000;right:889.00px;transform:scaleX(1.060);transform-origin:right center;">-</span>
<span style="font-size:11.6px;top:788.38px;color:#000;right:800.00px;transform:scaleX(1.060);transform-origin:right center;">-</span>
<span style="font-size:11.6px;top:788.38px;color:#000;right:711.00px;transform:scaleX(1.060);transform-origin:right center;">-</span>
<span style="font-size:11.6px;top:788.38px;color:#000;right:622.00px;transform:scaleX(1.060);transform-origin:right center;">-</span>
<span style="font-size:11.6px;top:788.38px;color:#000;right:533.00px;transform:scaleX(1.060);transform-origin:right center;">-</span>
<span style="font-size:11.6px;top:788.38px;color:#000;right:444.00px;transform:scaleX(1.060);transform-origin:right center;">-</span>
<span style="font-size:11.6px;top:788.38px;color:#000;right:355.00px;transform:scaleX(1.060);transform-origin:right center;">-</span>
<span style="font-size:11.6px;top:788.38px;color:#000;right:266.00px;transform:scaleX(1.060);transform-origin:right center;">-</span>
<span style="font-size:11.6px;top:788.38px;color:#000;right:177.00px;transform:scaleX(1.060);transform-origin:right center;">-</span>
<span style="font-size:11.6px;top:788.38px;color:#000;right:88.00px;transform:scaleX(1.060);transform-origin:right center;">-</span>
<span style="font-size:11.6px;top:812.18px;color:#000;left:109.804px;transform:scaleX(1.099);transform-origin:left center;">Existing terminal Buildings additions [F]</span>
<span style="font-size:11.6px;top:812.18px;color:#000;left:581.6039999999999px;transform:scaleX(0.943);transform-origin:left center;">USD k</span>
<span style="font-size:11.6px;top:811.38px;color:#000;right:1177.00px;transform:scaleX(1.060);transform-origin:right center;">-</span>
<span style="font-size:11.6px;top:811.38px;color:#000;right:1086.00px;transform:scaleX(1.060);transform-origin:right center;">-</span>
<span style="font-size:11.6px;top:811.38px;color:#000;right:978.00px;transform:scaleX(1.060);transform-origin:right center;">-</span>
<span style="font-size:11.6px;top:811.38px;color:#000;right:889.00px;transform:scaleX(1.060);transform-origin:right center;">-</span>
<span style="font-size:11.6px;top:811.38px;color:#000;right:800.00px;transform:scaleX(1.060);transform-origin:right center;">-</span>
<span style="font-size:11.6px;top:811.38px;color:#000;right:711.00px;transform:scaleX(1.060);transform-origin:right center;">-</span>
<span style="font-size:11.6px;top:811.38px;color:#000;right:622.00px;transform:scaleX(1.060);transform-origin:right center;">-</span>
<span style="font-size:11.6px;top:811.38px;color:#000;right:533.00px;transform:scaleX(1.060);transform-origin:right center;">-</span>
<span style="font-size:11.6px;top:811.38px;color:#000;right:444.00px;transform:scaleX(1.060);transform-origin:right center;">-</span>
<span style="font-size:11.6px;top:811.38px;color:#000;right:355.00px;transform:scaleX(1.060);transform-origin:right center;">-</span>
<span style="font-size:11.6px;top:811.38px;color:#000;right:266.00px;transform:scaleX(1.060);transform-origin:right center;">-</span>
<span style="font-size:11.6px;top:811.38px;color:#000;right:177.00px;transform:scaleX(1.060);transform-origin:right center;">-</span>
<span style="font-size:11.6px;top:811.38px;color:#000;right:88.00px;transform:scaleX(1.060);transform-origin:right center;">-</span>
<span style="font-size:11.6px;top:845.88px;color:#000;left:86.604px;transform:scaleX(1.011);transform-origin:left center;"> A&amp;F </span>
<span style="font-size:11.6px;top:863.18px;color:#0000ff;left:109.804px;transform:scaleX(1.100);transform-origin:left center;">Existing terminal Buildings additions [A]</span>
<span style="font-size:11.6px;top:862.38px;color:#0000ff;right:1352.50px;transform:scaleX(1.060);transform-origin:right center;">-</span>
<span style="font-size:11.6px;top:863.18px;color:#0000ff;left:581.6039999999999px;transform:scaleX(0.943);transform-origin:left center;">USD k</span>
<span style="font-size:11.6px;top:862.38px;color:#0000ff;right:1177.00px;transform:scaleX(1.060);transform-origin:right center;">-</span>
<span style="font-size:11.6px;top:862.38px;color:#0000ff;right:1086.00px;transform:scaleX(1.060);transform-origin:right center;">-</span>
<span style="font-size:11.6px;top:862.38px;color:#0000ff;right:1067.00px;transform:scaleX(1.060);transform-origin:right center;">-</span>
<span style="font-size:11.6px;top:862.38px;color:#0000ff;right:978.00px;transform:scaleX(1.060);transform-origin:right center;">-</span>
<span style="font-size:11.6px;top:862.38px;color:#0000ff;right:889.00px;transform:scaleX(1.060);transform-origin:right center;">-</span>
<span style="font-size:11.6px;top:862.38px;color:#0000ff;right:800.00px;transform:scaleX(1.060);transform-origin:right center;">-</span>
<span style="font-size:11.6px;top:862.38px;color:#0000ff;right:711.00px;transform:scaleX(1.060);transform-origin:right center;">-</span>
<span style="font-size:11.6px;top:862.38px;color:#0000ff;right:622.00px;transform:scaleX(1.060);transform-origin:right center;">-</span>
<span style="font-size:11.6px;top:862.38px;color:#0000ff;right:533.00px;transform:scaleX(1.060);transform-origin:right center;">-</span>
<span style="font-size:11.6px;top:862.38px;color:#0000ff;right:444.00px;transform:scaleX(1.060);transform-origin:right center;">-</span>
<span style="font-size:11.6px;top:862.38px;color:#0000ff;right:355.00px;transform:scaleX(1.060);transform-origin:right center;">-</span>
<span style="font-size:11.6px;top:862.38px;color:#0000ff;right:266.00px;transform:scaleX(1.060);transform-origin:right center;">-</span>
<span style="font-size:11.6px;top:862.38px;color:#0000ff;right:177.00px;transform:scaleX(1.060);transform-origin:right center;">-</span>
<span style="font-size:11.6px;top:862.38px;color:#0000ff;right:88.00px;transform:scaleX(1.060);transform-origin:right center;">-</span>
<span style="font-size:11.6px;top:880.18px;color:#0000ff;left:109.804px;transform:scaleX(1.100);transform-origin:left center;">Actuals period flag</span>
<span style="font-size:11.6px;top:879.38px;color:#0000ff;right:1352.50px;transform:scaleX(1.060);transform-origin:right center;">-</span>
<span style="font-size:11.6px;top:880.18px;color:#0000ff;left:581.6039999999999px;transform:scaleX(1.191);transform-origin:left center;">flag</span>
<span style="font-size:11.6px;top:879.38px;color:#0000ff;right:1177.00px;transform:scaleX(1.060);transform-origin:right center;">-</span>
<span style="font-size:11.6px;top:880.18px;color:#0000ff;right:1083.70px;transform:scaleX(1.060);transform-origin:right center;">4</span>
<span style="font-size:11.6px;top:879.38px;color:#0000ff;right:1067.00px;transform:scaleX(1.060);transform-origin:right center;">-</span>
<span style="font-size:11.6px;top:880.18px;color:#0000ff;right:975.70px;transform:scaleX(1.060);transform-origin:right center;">1</span>
<span style="font-size:11.6px;top:880.18px;color:#0000ff;right:886.70px;transform:scaleX(1.060);transform-origin:right center;">1</span>
<span style="font-size:11.6px;top:880.18px;color:#0000ff;right:797.70px;transform:scaleX(1.060);transform-origin:right center;">1</span>
<span style="font-size:11.6px;top:880.18px;color:#0000ff;right:708.70px;transform:scaleX(1.060);transform-origin:right center;">1</span>
<span style="font-size:11.6px;top:879.38px;color:#0000ff;right:622.00px;transform:scaleX(1.060);transform-origin:right center;">-</span>
<span style="font-size:11.6px;top:879.38px;color:#0000ff;right:533.00px;transform:scaleX(1.060);transform-origin:right center;">-</span>
<span style="font-size:11.6px;top:879.38px;color:#0000ff;right:444.00px;transform:scaleX(1.060);transform-origin:right center;">-</span>
<span style="font-size:11.6px;top:879.38px;color:#0000ff;right:355.00px;transform:scaleX(1.060);transform-origin:right center;">-</span>
<span style="font-size:11.6px;top:879.38px;color:#0000ff;right:266.00px;transform:scaleX(1.060);transform-origin:right center;">-</span>
<span style="font-size:11.6px;top:879.38px;color:#0000ff;right:177.00px;transform:scaleX(1.060);transform-origin:right center;">-</span>
<span style="font-size:11.6px;top:879.38px;color:#0000ff;right:88.00px;transform:scaleX(1.060);transform-origin:right center;">-</span>
<span style="font-size:11.6px;top:897.18px;color:#000;left:109.804px;transform:scaleX(1.099);transform-origin:left center;">Existing terminal Buildings additions [F]</span>
<span style="font-size:11.6px;top:896.38px;color:#000;right:1352.50px;transform:scaleX(1.060);transform-origin:right center;">-</span>
<span style="font-size:11.6px;top:897.18px;color:#000;left:581.6039999999999px;transform:scaleX(0.943);transform-origin:left center;">USD k</span>
<span style="font-size:11.6px;top:896.38px;color:#000;right:1177.00px;transform:scaleX(1.060);transform-origin:right center;">-</span>
<span style="font-size:11.6px;top:896.38px;color:#000;right:1086.00px;transform:scaleX(1.060);transform-origin:right center;">-</span>
<span style="font-size:11.6px;top:896.38px;color:#000;right:1067.00px;transform:scaleX(1.060);transform-origin:right center;">-</span>
<span style="font-size:11.6px;top:896.38px;color:#000;right:978.00px;transform:scaleX(1.060);transform-origin:right center;">-</span>
<span style="font-size:11.6px;top:896.38px;color:#000;right:889.00px;transform:scaleX(1.060);transform-origin:right center;">-</span>
<span style="font-size:11.6px;top:896.38px;color:#000;right:800.00px;transform:scaleX(1.060);transform-origin:right center;">-</span>
<span style="font-size:11.6px;top:896.38px;color:#000;right:711.00px;transform:scaleX(1.060);transform-origin:right center;">-</span>
<span style="font-size:11.6px;top:896.38px;color:#000;right:622.00px;transform:scaleX(1.060);transform-origin:right center;">-</span>
<span style="font-size:11.6px;top:896.38px;color:#000;right:533.00px;transform:scaleX(1.060);transform-origin:right center;">-</span>
<span style="font-size:11.6px;top:896.38px;color:#000;right:444.00px;transform:scaleX(1.060);transform-origin:right center;">-</span>
<span style="font-size:11.6px;top:896.38px;color:#000;right:355.00px;transform:scaleX(1.060);transform-origin:right center;">-</span>
<span style="font-size:11.6px;top:896.38px;color:#000;right:266.00px;transform:scaleX(1.060);transform-origin:right center;">-</span>
<span style="font-size:11.6px;top:896.38px;color:#000;right:177.00px;transform:scaleX(1.060);transform-origin:right center;">-</span>
<span style="font-size:11.6px;top:896.38px;color:#000;right:88.00px;transform:scaleX(1.060);transform-origin:right center;">-</span>
<span style="font-size:11.6px;top:914.18px;color:#ff0000;left:109.804px;transform:scaleX(1.104);transform-origin:left center;">Existing terminal Buildings additions</span>
<span style="font-size:11.6px;top:914.18px;color:#ff0000;left:581.6039999999999px;transform:scaleX(0.943);transform-origin:left center;">USD k</span>
<span style="font-size:11.6px;top:913.38px;color:#ff0000;right:1177.00px;transform:scaleX(1.060);transform-origin:right center;">-</span>
<span style="font-size:11.6px;top:913.38px;color:#ff0000;right:1086.00px;transform:scaleX(1.060);transform-origin:right center;">-</span>
<span style="font-size:11.6px;top:913.38px;color:#ff0000;right:978.00px;transform:scaleX(1.060);transform-origin:right center;">-</span>
<span style="font-size:11.6px;top:913.38px;color:#ff0000;right:889.00px;transform:scaleX(1.060);transform-origin:right center;">-</span>
<span style="font-size:11.6px;top:913.38px;color:#ff0000;right:800.00px;transform:scaleX(1.060);transform-origin:right center;">-</span>
<span style="font-size:11.6px;top:913.38px;color:#ff0000;right:711.00px;transform:scaleX(1.060);transform-origin:right center;">-</span>
<span style="font-size:11.6px;top:913.38px;color:#ff0000;right:622.00px;transform:scaleX(1.060);transform-origin:right center;">-</span>
<span style="font-size:11.6px;top:913.38px;color:#ff0000;right:533.00px;transform:scaleX(1.060);transform-origin:right center;">-</span>
<span style="font-size:11.6px;top:913.38px;color:#ff0000;right:444.00px;transform:scaleX(1.060);transform-origin:right center;">-</span>
<span style="font-size:11.6px;top:913.38px;color:#ff0000;right:355.00px;transform:scaleX(1.060);transform-origin:right center;">-</span>
<span style="font-size:11.6px;top:913.38px;color:#ff0000;right:266.00px;transform:scaleX(1.060);transform-origin:right center;">-</span>
<span style="font-size:11.6px;top:913.38px;color:#ff0000;right:177.00px;transform:scaleX(1.060);transform-origin:right center;">-</span>
<span style="font-size:11.6px;top:913.38px;color:#ff0000;right:88.00px;transform:scaleX(1.060);transform-origin:right center;">-</span>
<span style="font-size:11.6px;top:949.18px;color:#000;font-weight:700;left:79.504px;transform:scaleX(1.018);transform-origin:left center;">1.1.1. New terminal Infrastructure additions</span>
<span style="font-size:11.6px;top:967.18px;color:#0000ff;left:109.804px;transform:scaleX(1.079);transform-origin:left center;">New terminal Infrastructure - Development</span>
<span style="font-size:11.6px;top:966.38px;color:#0000ff;right:1352.50px;transform:scaleX(1.060);transform-origin:right center;">-</span>
<span style="font-size:11.6px;top:967.18px;color:#0000ff;left:581.6039999999999px;transform:scaleX(0.943);transform-origin:left center;">USD k</span>
<span style="font-size:11.6px;top:966.38px;color:#0000ff;right:1177.00px;transform:scaleX(1.060);transform-origin:right center;">-</span>
<span style="font-size:11.6px;top:966.38px;color:#0000ff;right:1086.00px;transform:scaleX(1.060);transform-origin:right center;">-</span>
<span style="font-size:11.6px;top:966.38px;color:#0000ff;right:1067.00px;transform:scaleX(1.060);transform-origin:right center;">-</span>
<span style="font-size:11.6px;top:966.38px;color:#0000ff;right:978.00px;transform:scaleX(1.060);transform-origin:right center;">-</span>
<span style="font-size:11.6px;top:966.38px;color:#0000ff;right:889.00px;transform:scaleX(1.060);transform-origin:right center;">-</span>
<span style="font-size:11.6px;top:966.38px;color:#0000ff;right:800.00px;transform:scaleX(1.060);transform-origin:right center;">-</span>
<span style="font-size:11.6px;top:966.38px;color:#0000ff;right:711.00px;transform:scaleX(1.060);transform-origin:right center;">-</span>
<span style="font-size:11.6px;top:966.38px;color:#0000ff;right:622.00px;transform:scaleX(1.060);transform-origin:right center;">-</span>
<span style="font-size:11.6px;top:966.38px;color:#0000ff;right:533.00px;transform:scaleX(1.060);transform-origin:right center;">-</span>
<span style="font-size:11.6px;top:966.38px;color:#0000ff;right:444.00px;transform:scaleX(1.060);transform-origin:right center;">-</span>
<span style="font-size:11.6px;top:966.38px;color:#0000ff;right:355.00px;transform:scaleX(1.060);transform-origin:right center;">-</span>
<span style="font-size:11.6px;top:966.38px;color:#0000ff;right:266.00px;transform:scaleX(1.060);transform-origin:right center;">-</span>
<span style="font-size:11.6px;top:966.38px;color:#0000ff;right:177.00px;transform:scaleX(1.060);transform-origin:right center;">-</span>
<span style="font-size:11.6px;top:966.38px;color:#0000ff;right:88.00px;transform:scaleX(1.060);transform-origin:right center;">-</span>
<span style="font-size:11.6px;top:984.18px;color:#0000ff;left:109.804px;transform:scaleX(1.097);transform-origin:left center;">New terminal Infrastructure - Civil works</span>
<span style="font-size:11.6px;top:983.38px;color:#0000ff;right:1352.50px;transform:scaleX(1.060);transform-origin:right center;">-</span>
<span style="font-size:11.6px;top:984.18px;color:#0000ff;left:581.6039999999999px;transform:scaleX(0.943);transform-origin:left center;">USD k</span>
<span style="font-size:11.6px;top:983.38px;color:#0000ff;right:1177.00px;transform:scaleX(1.060);transform-origin:right center;">-</span>
<span style="font-size:11.6px;top:983.38px;color:#0000ff;right:1086.00px;transform:scaleX(1.060);transform-origin:right center;">-</span>
<span style="font-size:11.6px;top:983.38px;color:#0000ff;right:1067.00px;transform:scaleX(1.060);transform-origin:right center;">-</span>
<span style="font-size:11.6px;top:983.38px;color:#0000ff;right:978.00px;transform:scaleX(1.060);transform-origin:right center;">-</span>
<span style="font-size:11.6px;top:983.38px;color:#0000ff;right:889.00px;transform:scaleX(1.060);transform-origin:right center;">-</span>
<span style="font-size:11.6px;top:983.38px;color:#0000ff;right:800.00px;transform:scaleX(1.060);transform-origin:right center;">-</span>
<span style="font-size:11.6px;top:983.38px;color:#0000ff;right:711.00px;transform:scaleX(1.060);transform-origin:right center;">-</span>
<span style="font-size:11.6px;top:984.18px;color:#0000ff;right:619.70px;transform:scaleX(1.060);transform-origin:right center;">2,375</span>
<span style="font-size:11.6px;top:984.18px;color:#0000ff;right:530.70px;transform:scaleX(1.060);transform-origin:right center;">2,375</span>
<span style="font-size:11.6px;top:984.18px;color:#0000ff;right:441.70px;transform:scaleX(1.060);transform-origin:right center;">2,375</span>
<span style="font-size:11.6px;top:984.18px;color:#0000ff;right:352.70px;transform:scaleX(1.060);transform-origin:right center;">2,375</span>
<span style="font-size:11.6px;top:983.38px;color:#0000ff;right:266.00px;transform:scaleX(1.060);transform-origin:right center;">-</span>
<span style="font-size:11.6px;top:983.38px;color:#0000ff;right:177.00px;transform:scaleX(1.060);transform-origin:right center;">-</span>
<span style="font-size:11.6px;top:983.38px;color:#0000ff;right:88.00px;transform:scaleX(1.060);transform-origin:right center;">-</span>
<span style="font-size:11.6px;top:1001.18px;color:#0000ff;left:109.804px;transform:scaleX(1.082);transform-origin:left center;">New terminal Infrastructure - Refurbishments</span>
<span style="font-size:11.6px;top:1000.38px;color:#0000ff;right:1352.50px;transform:scaleX(1.060);transform-origin:right center;">-</span>
<span style="font-size:11.6px;top:1001.18px;color:#0000ff;left:581.6039999999999px;transform:scaleX(0.943);transform-origin:left center;">USD k</span>
<span style="font-size:11.6px;top:1000.38px;color:#0000ff;right:1177.00px;transform:scaleX(1.060);transform-origin:right center;">-</span>
<span style="font-size:11.6px;top:1000.38px;color:#0000ff;right:1086.00px;transform:scaleX(1.060);transform-origin:right center;">-</span>
<span style="font-size:11.6px;top:1000.38px;color:#0000ff;right:1067.00px;transform:scaleX(1.060);transform-origin:right center;">-</span>
<span style="font-size:11.6px;top:1000.38px;color:#0000ff;right:978.00px;transform:scaleX(1.060);transform-origin:right center;">-</span>
<span style="font-size:11.6px;top:1000.38px;color:#0000ff;right:889.00px;transform:scaleX(1.060);transform-origin:right center;">-</span>
<span style="font-size:11.6px;top:1000.38px;color:#0000ff;right:800.00px;transform:scaleX(1.060);transform-origin:right center;">-</span>
<span style="font-size:11.6px;top:1000.38px;color:#0000ff;right:711.00px;transform:scaleX(1.060);transform-origin:right center;">-</span>
<span style="font-size:11.6px;top:1001.18px;color:#0000ff;right:619.70px;transform:scaleX(1.060);transform-origin:right center;">1,250</span>
<span style="font-size:11.6px;top:1001.18px;color:#0000ff;right:530.70px;transform:scaleX(1.060);transform-origin:right center;">1,250</span>
<span style="font-size:11.6px;top:1001.18px;color:#0000ff;right:441.70px;transform:scaleX(1.060);transform-origin:right center;">1,250</span>
<span style="font-size:11.6px;top:1001.18px;color:#0000ff;right:352.70px;transform:scaleX(1.060);transform-origin:right center;">1,250</span>
<span style="font-size:11.6px;top:1000.38px;color:#0000ff;right:266.00px;transform:scaleX(1.060);transform-origin:right center;">-</span>
<span style="font-size:11.6px;top:1000.38px;color:#0000ff;right:177.00px;transform:scaleX(1.060);transform-origin:right center;">-</span>
<span style="font-size:11.6px;top:1000.38px;color:#0000ff;right:88.00px;transform:scaleX(1.060);transform-origin:right center;">-</span>
<div style="left:861px;top:271px;width:87px;height:16px;border:2px solid #217346;"></div>
<div style="left:946px;top:286px;width:6px;height:6px;background:#217346;border-top:1px solid #fff;border-left:1px solid #fff;"></div>
<div style="left:861px;top:156px;width:1px;height:867px;background:#9b9b9b;"></div>
<div style="left:0px;top:271px;width:1894px;height:1px;background:#9b9b9b;"></div>
<div style="left:1894px;top:136px;width:26px;height:887px;background:#e6e6e6;"></div>
<div style="left:1894px;top:156px;width:1px;height:867px;background:#b0b0b0;"></div>
<div style="left:1895px;top:156px;width:25px;height:867px;background:#e6e6e6;"></div>
<div style="left:1898px;top:156px;width:19px;height:848px;background:#d9d9d9;"></div>
<div style="left:1898px;top:138px;width:17px;height:17px;background:#fff;border:1px solid #c3c3c3;"></div>
<svg style="left:1902px;top:143px" width="11" height="7" viewBox="0 0 11 7"><path d="M5.5 0.8 L10.2 6 H0.8 Z" fill="#777"/></svg>
<div style="left:1898px;top:157px;width:17px;height:60px;background:#fff;border:1px solid #c3c3c3;"></div>
<div style="left:1898px;top:1004px;width:17px;height:17px;background:#fff;border:1px solid #c3c3c3;"></div>
<svg style="left:1902.4px;top:1010.8px" width="11" height="7" viewBox="0 0 11 7"><path d="M5.5 6 L10 0.8 H1 Z" fill="#6e6e6e"/></svg>
<div style="left:0px;top:1023px;width:1920px;height:30px;background:#e6e6e6;"></div>
<div style="left:0px;top:1023px;width:1895px;height:1px;background:#b0b0b0;"></div>
<div style="left:0px;top:1052px;width:1920px;height:1px;background:#c8c8c8;"></div>
<div style="left:0px;top:1053px;width:1920px;height:25px;background:#f3f2f1;"></div>
<div style="left:0px;top:1078px;width:1920px;height:2px;background:#9a9a9a;"></div>
<div style="left:0px;top:1078px;width:60px;height:2px;background:#3b3b3b;"></div>
<svg style="left:27px;top:1031px" width="8" height="12" viewBox="0 0 8 12"><path d="M6.6 1 V11 L1 6 Z" fill="#217346"/></svg>
<svg style="left:55px;top:1031px" width="8" height="12" viewBox="0 0 8 12"><path d="M1.4 1 V11 L7 6 Z" fill="#217346"/></svg>
<div style="left:103px;top:1027px;width:1px;height:21px;background:#ababab;"></div>
<div style="left:106px;top:1026px;width:76px;height:23px;background:#2f759e;"></div>
<div style="left:184px;top:1027px;width:1px;height:21px;background:#ababab;"></div>
<div style="left:187px;top:1026px;width:77px;height:23px;background:#ffffcc;"></div>
<div style="left:266px;top:1027px;width:1px;height:21px;background:#ababab;"></div>
<div style="left:269px;top:1026px;width:69px;height:23px;background:#ffffcc;"></div>
<div style="left:340px;top:1027px;width:1px;height:21px;background:#ababab;"></div>
<div style="left:343px;top:1026px;width:82px;height:23px;background:#c0c0c0;"></div>
<div style="left:427px;top:1027px;width:1px;height:21px;background:#ababab;"></div>
<div style="left:430px;top:1026px;width:60px;height:23px;background:#c0c0c0;"></div>
<div style="left:492px;top:1027px;width:1px;height:21px;background:#ababab;"></div>
<div style="left:495.3px;top:1026px;width:97.40000000000003px;height:23px;background:#c0c0c0;"></div>
<div style="left:594.7px;top:1027px;width:1px;height:21px;background:#ababab;"></div>
<div style="left:598.3px;top:1026px;width:79.40000000000009px;height:23px;background:#c0c0c0;"></div>
<div style="left:679.7px;top:1027px;width:1px;height:21px;background:#ababab;"></div>
<div style="left:683.3px;top:1026px;width:63.40000000000009px;height:23px;background:#c0c0c0;"></div>
<div style="left:748.7px;top:1027px;width:1px;height:21px;background:#ababab;"></div>
<div style="left:752.3px;top:1026px;width:85.40000000000009px;height:23px;background:#c0c0c0;"></div>
<div style="left:839.7px;top:1027px;width:1px;height:21px;background:#ababab;"></div>
<div style="left:843.3px;top:1026px;width:60.0px;height:23px;background:#c0c0c0;"></div>
<div style="left:905.3px;top:1027px;width:1px;height:21px;background:#ababab;"></div>
<div style="left:909.3px;top:1026px;width:60.700000000000045px;height:23px;background:#c0c0c0;"></div>
<div style="left:972px;top:1027px;width:1px;height:21px;background:#ababab;"></div>
<div style="left:972px;top:1023px;width:74px;height:24px;background:#fff;background:linear-gradient(#fff 55%,#ebebeb);"></div>
<div style="left:972px;top:1023px;width:1px;height:24px;background:#ababab;"></div>
<div style="left:1045px;top:1023px;width:1px;height:24px;background:#ababab;"></div>
<div style="left:972px;top:1047px;width:74px;height:2px;background:#217346;"></div>
<div style="left:1048.3px;top:1026px;width:29.5px;height:23px;background:#c0c0c0;"></div>
<div style="left:1048.3px;top:1026px;width:29.5px;height:23px;overflow:hidden;"><span style="left:10.6px;top:0.8px;font-size:16.8px;color:#000;">Fin</span></div>
<svg style="left:1111px;top:1028px" width="20" height="20" viewBox="0 0 20 20" fill="none" stroke="#777" stroke-width="1.3"><circle cx="10" cy="10" r="9.2"/><path d="M10 5 V15 M5 10 H15" stroke-width="1.9"/></svg>
<div style="left:1149px;top:1031px;width:3px;height:3px;background:#a8a8a8;"></div>
<div style="left:1149px;top:1036px;width:3px;height:3px;background:#a8a8a8;"></div>
<div style="left:1149px;top:1041px;width:3px;height:3px;background:#a8a8a8;"></div>
<div style="left:1167px;top:1028px;width:726px;height:19px;background:#d9d9d9;"></div>
<div style="left:1167px;top:1028px;width:17px;height:17px;background:#fff;border:1px solid #c3c3c3;"></div>
<svg style="left:1172px;top:1032px" width="7" height="11" viewBox="0 0 7 11"><path d="M6 0.6 V10.4 L0.8 5.5 Z" fill="#6e6e6e"/></svg>
<div style="left:1186px;top:1028px;width:77px;height:17px;background:#fff;border:1px solid #c3c3c3;"></div>
<div style="left:1874px;top:1028px;width:17px;height:17px;background:#fff;border:1px solid #c3c3c3;"></div>
<svg style="left:1881px;top:1032px" width="7" height="11" viewBox="0 0 7 11"><path d="M1 0.6 V10.4 L6.2 5.5 Z" fill="#6e6e6e"/></svg>
<svg style="left:69px;top:1058px" width="21" height="18" viewBox="0 0 21 18" fill="none" stroke="#555" stroke-width="1.3">
<path d="M9 15.6 H1.6 V1.6 H17.4 V5.4"/><path d="M1.6 3.6 H17.4" stroke-width="2.6"/><path d="M4 8 H7.6 M4 11 H6.6"/><circle cx="13.6" cy="11.6" r="5"/><circle cx="13.6" cy="11.6" r="2.2" fill="#555" stroke="none"/></svg>
<div style="left:1555.4px;top:1053px;width:49.6px;height:25px;background:#c8c8c8;"></div>
<svg style="left:1571px;top:1057px" width="17" height="16" viewBox="0 0 17 16" fill="none" stroke="#555" stroke-width="1.5">
<rect x="0.9" y="0.9" width="15.2" height="14.2"/><path d="M6 0.9 V15.1 M11 0.9 V15.1 M0.9 5.6 H16.1 M0.9 10.4 H16.1"/></svg>
<svg style="left:1621px;top:1057px" width="18" height="16" viewBox="0 0 18 16" fill="none" stroke="#555" stroke-width="1.4">
<rect x="0.8" y="0.8" width="16.4" height="14.4"/><rect x="4.4" y="3.6" width="9.2" height="8.8" stroke-width="1.2"/><path d="M6.4 6.4 H11.6 M6.4 9.4 H11.6" stroke-width="1.1"/></svg>
<svg style="left:1671px;top:1057px" width="18" height="16" viewBox="0 0 18 16" fill="none" stroke="#555" stroke-width="1.4">
<rect x="0.8" y="0.8" width="16.4" height="14.4"/><path d="M0.8 8.6 H11 V0.8 M6 0.8 V8.6"/></svg>
<div style="left:1712.2px;top:1064.6px;width:9px;height:1.3px;background:#444;"></div>
<div style="left:1728px;top:1065px;width:125px;height:1px;background:#a6a6a6;"></div>
<div style="left:1775px;top:1059px;width:5.6px;height:13.6px;background:#777;"></div>
<div style="left:1790.3px;top:1061px;width:1px;height:9px;background:#a6a6a6;"></div>
<div style="left:1859px;top:1064.6px;width:9.6px;height:1.3px;background:#444;"></div>
<div style="left:1863.2px;top:1060.4px;width:1.3px;height:9.6px;background:#444;"></div>
<div style="left:0px;top:1078px;width:1920px;height:2px;background:#3f3f3f;"></div>
<div style="left:60px;top:1078px;width:430px;height:2px;background:#c2c2c2;"></div>
<div style="left:863px;top:1078px;width:57px;height:2px;background:#8a8a8a;"></div>
<span style="font-size:16.8px;top:1026.78px;color:#fff;left:115.992px;transform:scaleX(1.013);transform-origin:left center;">FinStat</span>
<span style="font-size:16.8px;top:1026.78px;color:#000;left:196.242px;transform:scaleX(1.024);transform-origin:left center;">Actuals</span>
<span style="font-size:16.8px;top:1026.78px;color:#000;left:278.492px;transform:scaleX(1.068);transform-origin:left center;">Inputs</span>
<span style="font-size:16.8px;top:1026.78px;color:#000;left:351.992px;transform:scaleX(1.044);transform-origin:left center;">Convert</span>
<span style="font-size:16.8px;top:1026.78px;color:#000;left:438.992px;transform:scaleX(0.963);transform-origin:left center;">Flags</span>
<span style="font-size:16.8px;top:1026.78px;color:#000;left:504.29200000000003px;">Escalation</span>
<span style="font-size:16.8px;top:1026.78px;color:#000;left:606.992px;transform:scaleX(1.069);transform-origin:left center;">Volume</span>
<span style="font-size:16.8px;top:1026.78px;color:#000;left:693.992px;transform:scaleX(1.113);transform-origin:left center;">Tariff</span>
<span style="font-size:16.8px;top:1026.78px;color:#000;left:761.2919999999999px;transform:scaleX(0.986);transform-origin:left center;">Revenue</span>
<span style="font-size:16.8px;top:1026.78px;color:#000;left:851.2919999999999px;transform:scaleX(0.985);transform-origin:left center;">Costs</span>
<span style="font-size:16.8px;top:1026.78px;color:#000;left:918.2919999999999px;transform:scaleX(1.043);transform-origin:left center;">Opex</span>
<span style="font-size:16.8px;top:1026.78px;color:#217346;font-weight:700;left:983.2919999999999px;transform:scaleX(1.009);transform-origin:left center;">Capex</span>
<span style="font-size:16.8px;top:1026.78px;color:#1e6b41;font-weight:700;left:80.69200000000001px;transform:scaleX(1.061);transform-origin:left center;">...</span>
<span style="font-size:16.8px;top:1026.78px;color:#1e6b41;font-weight:700;left:1084.992px;transform:scaleX(1.011);transform-origin:left center;">...</span>
<span style="font-size:12.6px;top:1060.73px;color:#444;left:8.494px;transform:scaleX(1.020);transform-origin:left center;">Ready</span>
<span style="font-size:12.5px;top:1060.92px;color:#444;left:1884.65px;transform:scaleX(1.014);transform-origin:left center;">80%</span>
</div></body></html>
